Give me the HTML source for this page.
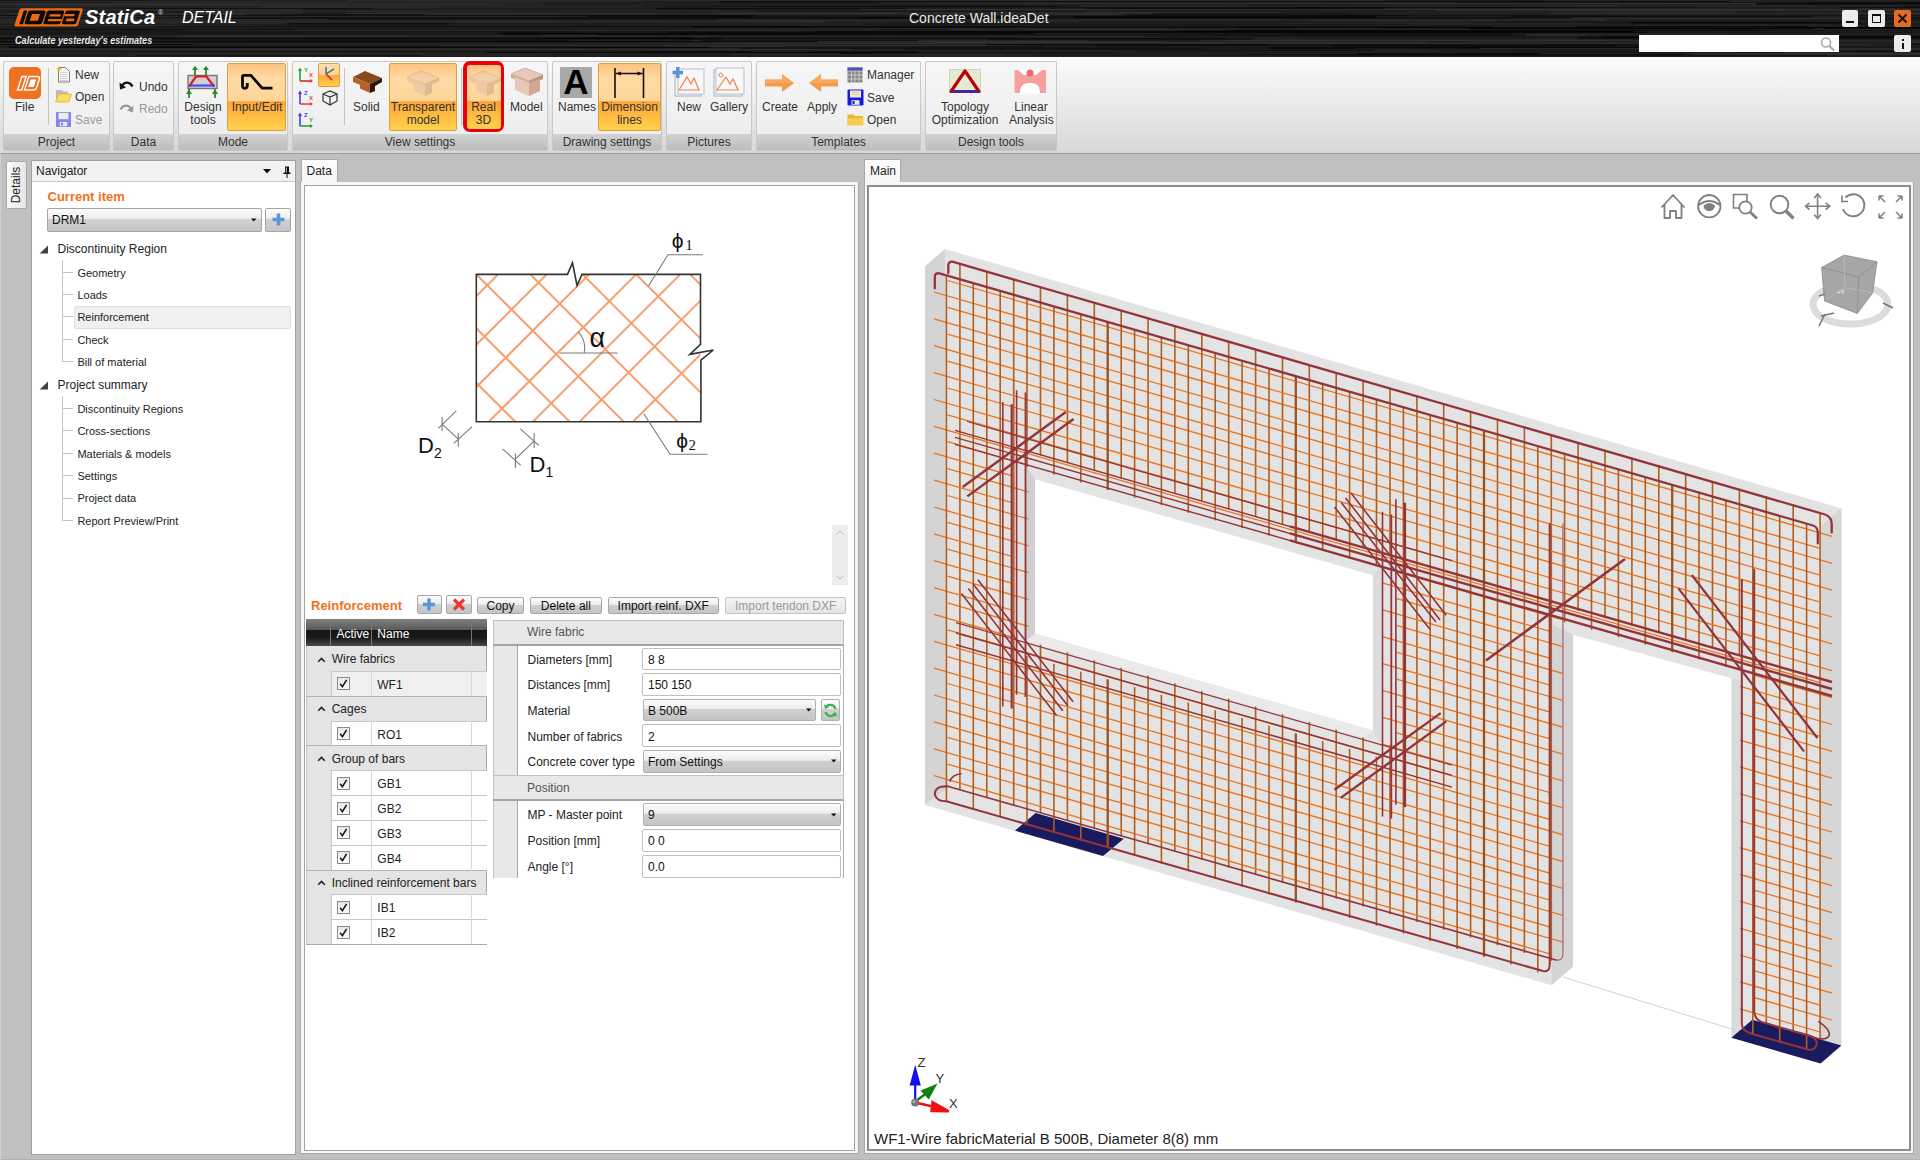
<!DOCTYPE html>
<html><head><meta charset="utf-8">
<style>
*{box-sizing:border-box;margin:0;padding:0}
html,body{width:1920px;height:1160px;overflow:hidden}
body{position:relative;background:#c0c0c0;font-family:"Liberation Sans",sans-serif;font-size:12px;color:#222}
.a{position:absolute}
.t{position:absolute;white-space:nowrap;line-height:1}
/* title bar */
#title{left:0;top:0;width:1920px;height:57px;background:#0a0a0a;overflow:hidden}
/* ribbon */
#ribbon{left:0;top:57px;width:1920px;height:97px;background:linear-gradient(#fbfbfb,#d8d8d8);border-bottom:1px solid #9a9a9a}
.grp{position:absolute;top:4px;height:90px;border:1px solid #c8c8c8;border-radius:2px;background:linear-gradient(#f6f6f6,#ececec)}
.glab{position:absolute;left:0;right:0;bottom:0;height:16px;background:linear-gradient(#d2d2d2,#bdbdbd);text-align:center;font-size:12px;line-height:16px;color:#333}
.hl{position:absolute;border:1px solid #d9a040;border-radius:2px;background:linear-gradient(#ffc27e 0%,#ffdaa4 22%,#ffd597 56%,#ffa43a 57%,#ffd24a 100%)}
.rt{position:absolute;font-size:12px;color:#333;white-space:nowrap;line-height:13px;text-align:center}
.gray{color:#9a9a9a}
/* panels */
.panel{position:absolute;background:#fff}
.tree{position:absolute;font-size:11px;color:#222;white-space:nowrap;line-height:1}
</style></head><body>

<div id="title" class="a">
<svg class="a" style="left:0;top:0" width="1920" height="57"><rect width="1920" height="57" fill="#1d1d1d"/><rect x="35" y="18.5" width="833" height="0.6" fill="#000" opacity="0.35"/><rect x="1720" y="33.2" width="375" height="0.6" fill="#3a3a3a" opacity="0.28"/><rect x="642" y="5.2" width="1018" height="0.6" fill="#000" opacity="0.62"/><rect x="-163" y="33.2" width="765" height="0.6" fill="#000" opacity="0.32"/><rect x="343" y="48.9" width="301" height="0.6" fill="#000" opacity="0.58"/><rect x="-71" y="38.9" width="750" height="0.8" fill="#3a3a3a" opacity="0.50"/><rect x="-168" y="3.6" width="366" height="1.6" fill="#3a3a3a" opacity="0.39"/><rect x="706" y="33.4" width="465" height="0.8" fill="#000" opacity="0.42"/><rect x="866" y="32.7" width="1069" height="1.3" fill="#3a3a3a" opacity="0.69"/><rect x="628" y="6.7" width="945" height="0.8" fill="#000" opacity="0.51"/><rect x="-128" y="54.8" width="736" height="1.0" fill="#3a3a3a" opacity="0.41"/><rect x="1469" y="28.3" width="222" height="0.6" fill="#000" opacity="0.54"/><rect x="-165" y="37.9" width="887" height="1.6" fill="#000" opacity="0.71"/><rect x="556" y="16.2" width="852" height="0.6" fill="#000" opacity="0.48"/><rect x="796" y="34.8" width="379" height="1.0" fill="#3a3a3a" opacity="0.36"/><rect x="1635" y="22.3" width="235" height="1.3" fill="#3a3a3a" opacity="0.38"/><rect x="656" y="7.8" width="728" height="1.3" fill="#000" opacity="0.64"/><rect x="212" y="21.7" width="237" height="0.8" fill="#3a3a3a" opacity="0.36"/><rect x="1008" y="27.6" width="426" height="0.6" fill="#3a3a3a" opacity="0.49"/><rect x="407" y="34.8" width="282" height="1.6" fill="#000" opacity="0.63"/><rect x="714" y="42.2" width="1065" height="1.6" fill="#3a3a3a" opacity="0.43"/><rect x="1108" y="5.9" width="215" height="0.6" fill="#000" opacity="0.52"/><rect x="1034" y="6.3" width="257" height="1.6" fill="#3a3a3a" opacity="0.30"/><rect x="-243" y="20.7" width="1068" height="1.6" fill="#3a3a3a" opacity="0.54"/><rect x="1037" y="54.5" width="648" height="0.6" fill="#000" opacity="0.80"/><rect x="774" y="26.6" width="240" height="0.6" fill="#000" opacity="0.67"/><rect x="1236" y="27.3" width="692" height="0.8" fill="#000" opacity="0.56"/><rect x="906" y="8.4" width="178" height="1.6" fill="#3a3a3a" opacity="0.54"/><rect x="1577" y="5.2" width="694" height="0.8" fill="#3a3a3a" opacity="0.35"/><rect x="816" y="30.9" width="818" height="1.6" fill="#000" opacity="0.79"/><rect x="1489" y="48.6" width="1009" height="0.8" fill="#3a3a3a" opacity="0.47"/><rect x="1897" y="41.7" width="980" height="1.3" fill="#3a3a3a" opacity="0.56"/><rect x="693" y="54.5" width="1134" height="1.0" fill="#000" opacity="0.48"/><rect x="204" y="12.6" width="357" height="0.8" fill="#3a3a3a" opacity="0.69"/><rect x="-296" y="34.8" width="1105" height="1.0" fill="#000" opacity="0.34"/><rect x="1720" y="37.7" width="971" height="0.8" fill="#3a3a3a" opacity="0.33"/><rect x="438" y="45.0" width="991" height="1.3" fill="#3a3a3a" opacity="0.58"/><rect x="53" y="4.8" width="1193" height="0.6" fill="#3a3a3a" opacity="0.66"/><rect x="25" y="46.0" width="1018" height="1.3" fill="#000" opacity="0.48"/><rect x="-9" y="31.3" width="165" height="0.6" fill="#3a3a3a" opacity="0.67"/><rect x="1635" y="24.7" width="1017" height="0.8" fill="#3a3a3a" opacity="0.35"/><rect x="1395" y="28.6" width="492" height="1.6" fill="#3a3a3a" opacity="0.31"/><rect x="485" y="51.9" width="631" height="1.6" fill="#000" opacity="0.56"/><rect x="1650" y="47.1" width="287" height="0.8" fill="#3a3a3a" opacity="0.26"/><rect x="106" y="25.1" width="154" height="0.8" fill="#3a3a3a" opacity="0.46"/><rect x="935" y="41.3" width="492" height="1.6" fill="#3a3a3a" opacity="0.47"/><rect x="1661" y="44.3" width="210" height="0.8" fill="#3a3a3a" opacity="0.60"/><rect x="947" y="28.9" width="948" height="0.6" fill="#3a3a3a" opacity="0.53"/><rect x="837" y="28.8" width="877" height="1.3" fill="#3a3a3a" opacity="0.61"/><rect x="250" y="28.9" width="699" height="1.0" fill="#000" opacity="0.75"/><rect x="694" y="11.5" width="587" height="1.3" fill="#3a3a3a" opacity="0.28"/><rect x="-138" y="13.7" width="853" height="0.6" fill="#000" opacity="0.38"/><rect x="1166" y="40.8" width="300" height="0.8" fill="#000" opacity="0.41"/><rect x="584" y="54.3" width="662" height="0.8" fill="#3a3a3a" opacity="0.44"/><rect x="453" y="29.4" width="356" height="1.0" fill="#3a3a3a" opacity="0.41"/><rect x="718" y="19.3" width="888" height="1.3" fill="#3a3a3a" opacity="0.53"/><rect x="-157" y="29.2" width="1184" height="0.8" fill="#000" opacity="0.35"/><rect x="-212" y="15.1" width="968" height="1.0" fill="#000" opacity="0.71"/><rect x="1201" y="48.4" width="1143" height="1.3" fill="#3a3a3a" opacity="0.66"/><rect x="1255" y="32.5" width="244" height="0.6" fill="#000" opacity="0.39"/><rect x="297" y="51.0" width="168" height="0.6" fill="#000" opacity="0.34"/><rect x="-152" y="48.8" width="1056" height="1.3" fill="#3a3a3a" opacity="0.70"/><rect x="1732" y="23.8" width="803" height="0.6" fill="#3a3a3a" opacity="0.36"/><rect x="58" y="6.2" width="203" height="0.8" fill="#000" opacity="0.61"/><rect x="157" y="30.3" width="618" height="0.8" fill="#3a3a3a" opacity="0.61"/><rect x="-218" y="56.7" width="169" height="1.6" fill="#000" opacity="0.39"/><rect x="1775" y="27.1" width="262" height="1.3" fill="#000" opacity="0.57"/><rect x="1854" y="50.7" width="473" height="0.8" fill="#000" opacity="0.47"/><rect x="1269" y="47.4" width="818" height="1.3" fill="#000" opacity="0.79"/><rect x="-268" y="47.7" width="807" height="1.0" fill="#3a3a3a" opacity="0.27"/><rect x="546" y="37.9" width="681" height="1.0" fill="#000" opacity="0.65"/><rect x="111" y="2.6" width="432" height="0.6" fill="#3a3a3a" opacity="0.68"/><rect x="915" y="55.4" width="407" height="1.0" fill="#3a3a3a" opacity="0.33"/><rect x="-114" y="19.1" width="443" height="0.8" fill="#3a3a3a" opacity="0.60"/><rect x="1514" y="5.2" width="301" height="1.6" fill="#3a3a3a" opacity="0.26"/><rect x="217" y="17.3" width="765" height="1.6" fill="#000" opacity="0.38"/><rect x="1441" y="50.9" width="776" height="1.0" fill="#000" opacity="0.55"/><rect x="1074" y="16.2" width="302" height="1.6" fill="#000" opacity="0.67"/><rect x="9" y="46.3" width="700" height="1.6" fill="#000" opacity="0.71"/><rect x="1224" y="0.9" width="988" height="0.8" fill="#3a3a3a" opacity="0.27"/><rect x="1830" y="36.3" width="545" height="1.3" fill="#000" opacity="0.61"/><rect x="1211" y="35.7" width="664" height="0.6" fill="#3a3a3a" opacity="0.28"/><rect x="1693" y="53.2" width="247" height="1.6" fill="#3a3a3a" opacity="0.58"/><rect x="-135" y="14.4" width="429" height="0.8" fill="#3a3a3a" opacity="0.54"/><rect x="1577" y="26.2" width="231" height="1.0" fill="#000" opacity="0.61"/><rect x="-128" y="36.6" width="305" height="1.0" fill="#000" opacity="0.65"/><rect x="-4" y="35.4" width="657" height="1.3" fill="#3a3a3a" opacity="0.55"/><rect x="1200" y="39.5" width="455" height="1.6" fill="#3a3a3a" opacity="0.46"/><rect x="1905" y="43.7" width="727" height="1.0" fill="#000" opacity="0.77"/><rect x="719" y="1.0" width="1011" height="1.3" fill="#000" opacity="0.49"/><rect x="1766" y="52.2" width="228" height="0.6" fill="#3a3a3a" opacity="0.49"/><rect x="-6" y="54.3" width="1011" height="1.6" fill="#3a3a3a" opacity="0.30"/><rect x="805" y="20.8" width="1070" height="1.3" fill="#3a3a3a" opacity="0.25"/><rect x="701" y="28.0" width="467" height="0.8" fill="#3a3a3a" opacity="0.42"/><rect x="436" y="6.9" width="491" height="1.0" fill="#000" opacity="0.36"/><rect x="1283" y="52.8" width="1097" height="1.0" fill="#3a3a3a" opacity="0.28"/><rect x="1631" y="22.2" width="230" height="1.3" fill="#000" opacity="0.73"/><rect x="-185" y="16.0" width="845" height="0.8" fill="#3a3a3a" opacity="0.37"/><rect x="121" y="29.1" width="542" height="1.3" fill="#000" opacity="0.71"/><rect x="1728" y="36.0" width="1138" height="1.6" fill="#3a3a3a" opacity="0.29"/><rect x="612" y="53.2" width="796" height="0.8" fill="#000" opacity="0.44"/><rect x="1757" y="2.8" width="284" height="1.3" fill="#3a3a3a" opacity="0.38"/><rect x="1340" y="14.6" width="835" height="1.3" fill="#000" opacity="0.45"/><rect x="575" y="31.8" width="326" height="0.8" fill="#3a3a3a" opacity="0.48"/><rect x="922" y="46.3" width="626" height="1.0" fill="#000" opacity="0.52"/><rect x="127" y="8.0" width="245" height="1.0" fill="#000" opacity="0.46"/><rect x="1497" y="21.0" width="362" height="0.6" fill="#000" opacity="0.51"/><rect x="864" y="23.6" width="546" height="1.0" fill="#000" opacity="0.55"/><rect x="500" y="32.7" width="871" height="1.6" fill="#000" opacity="0.73"/><rect x="302" y="12.3" width="411" height="1.3" fill="#000" opacity="0.52"/><rect x="1508" y="17.8" width="1166" height="0.8" fill="#3a3a3a" opacity="0.57"/><rect x="751" y="51.1" width="767" height="0.6" fill="#3a3a3a" opacity="0.67"/><rect x="872" y="52.9" width="642" height="1.3" fill="#3a3a3a" opacity="0.30"/><rect x="860" y="8.8" width="866" height="1.3" fill="#3a3a3a" opacity="0.60"/><rect x="-21" y="0.1" width="748" height="0.6" fill="#000" opacity="0.45"/><rect x="259" y="7.3" width="818" height="0.6" fill="#3a3a3a" opacity="0.39"/><rect x="126" y="53.8" width="424" height="1.6" fill="#3a3a3a" opacity="0.49"/><rect x="319" y="56.8" width="482" height="0.8" fill="#3a3a3a" opacity="0.36"/><rect x="1833" y="14.1" width="890" height="1.0" fill="#3a3a3a" opacity="0.34"/><rect x="1137" y="50.4" width="235" height="0.8" fill="#000" opacity="0.76"/><rect x="-224" y="12.9" width="505" height="1.3" fill="#3a3a3a" opacity="0.43"/><rect x="348" y="0.4" width="1037" height="0.6" fill="#3a3a3a" opacity="0.69"/><rect x="1520" y="17.8" width="392" height="0.8" fill="#3a3a3a" opacity="0.65"/><rect x="1084" y="6.2" width="791" height="0.8" fill="#3a3a3a" opacity="0.66"/><rect x="1020" y="3.2" width="1118" height="0.6" fill="#3a3a3a" opacity="0.69"/><rect x="-185" y="8.1" width="213" height="1.3" fill="#3a3a3a" opacity="0.57"/><rect x="-49" y="17.9" width="233" height="0.8" fill="#3a3a3a" opacity="0.33"/><rect x="1357" y="53.3" width="183" height="1.3" fill="#000" opacity="0.79"/><rect x="-58" y="25.2" width="232" height="0.6" fill="#3a3a3a" opacity="0.68"/><rect x="1841" y="7.1" width="368" height="1.0" fill="#000" opacity="0.45"/><rect x="-105" y="45.8" width="891" height="0.8" fill="#3a3a3a" opacity="0.66"/><rect x="509" y="11.0" width="1092" height="0.6" fill="#000" opacity="0.42"/><rect x="599" y="35.6" width="544" height="1.3" fill="#3a3a3a" opacity="0.66"/><rect x="1359" y="14.6" width="1093" height="1.0" fill="#3a3a3a" opacity="0.40"/><rect x="-203" y="54.4" width="934" height="1.0" fill="#000" opacity="0.45"/><rect x="1022" y="41.1" width="996" height="0.6" fill="#3a3a3a" opacity="0.36"/><rect x="1824" y="27.1" width="1152" height="1.3" fill="#000" opacity="0.76"/><rect x="-5" y="46.4" width="671" height="0.6" fill="#000" opacity="0.67"/><rect x="1416" y="46.9" width="788" height="1.0" fill="#000" opacity="0.53"/><rect x="1022" y="44.7" width="687" height="1.3" fill="#000" opacity="0.42"/><rect x="-225" y="3.7" width="730" height="1.0" fill="#3a3a3a" opacity="0.44"/><rect x="-140" y="6.0" width="806" height="0.8" fill="#3a3a3a" opacity="0.47"/><rect x="692" y="40.5" width="396" height="1.3" fill="#3a3a3a" opacity="0.65"/><rect x="896" y="13.4" width="963" height="0.6" fill="#000" opacity="0.45"/><rect x="294" y="15.9" width="417" height="1.0" fill="#3a3a3a" opacity="0.36"/><rect x="40" y="14.0" width="1078" height="1.6" fill="#3a3a3a" opacity="0.28"/><rect x="246" y="14.3" width="703" height="0.6" fill="#000" opacity="0.80"/><rect x="754" y="5.8" width="1010" height="1.3" fill="#000" opacity="0.32"/><rect x="-35" y="16.7" width="349" height="1.6" fill="#3a3a3a" opacity="0.28"/><rect x="95" y="29.2" width="783" height="0.6" fill="#3a3a3a" opacity="0.52"/><rect x="183" y="35.3" width="537" height="0.8" fill="#3a3a3a" opacity="0.70"/><rect x="1326" y="2.2" width="1110" height="0.6" fill="#000" opacity="0.50"/><rect x="1079" y="21.2" width="232" height="0.6" fill="#000" opacity="0.57"/><rect x="-75" y="3.6" width="565" height="1.6" fill="#3a3a3a" opacity="0.49"/><rect x="583" y="37.2" width="435" height="1.0" fill="#000" opacity="0.51"/><rect x="1355" y="2.9" width="1078" height="1.3" fill="#3a3a3a" opacity="0.64"/><rect x="508" y="56.8" width="357" height="1.3" fill="#3a3a3a" opacity="0.25"/><rect x="641" y="51.4" width="1011" height="1.3" fill="#000" opacity="0.48"/><rect x="-11" y="44.1" width="204" height="0.8" fill="#000" opacity="0.75"/><rect x="1081" y="5.1" width="539" height="1.6" fill="#3a3a3a" opacity="0.41"/><rect x="81" y="9.2" width="220" height="1.3" fill="#3a3a3a" opacity="0.61"/><rect x="138" y="55.1" width="283" height="0.6" fill="#000" opacity="0.54"/><rect x="1756" y="3.0" width="557" height="1.6" fill="#000" opacity="0.75"/><rect x="1602" y="36.5" width="802" height="1.6" fill="#000" opacity="0.71"/><rect x="184" y="10.4" width="570" height="1.6" fill="#3a3a3a" opacity="0.41"/><rect x="1855" y="8.5" width="1006" height="0.8" fill="#3a3a3a" opacity="0.50"/><rect x="-215" y="43.2" width="1030" height="0.6" fill="#3a3a3a" opacity="0.46"/><rect x="1427" y="48.4" width="831" height="1.0" fill="#000" opacity="0.51"/><rect x="692" y="37.6" width="610" height="0.6" fill="#3a3a3a" opacity="0.69"/><rect x="692" y="26.5" width="800" height="1.3" fill="#000" opacity="0.71"/><rect x="-151" y="22.8" width="527" height="1.0" fill="#3a3a3a" opacity="0.45"/><rect x="-209" y="29.1" width="818" height="0.6" fill="#000" opacity="0.46"/><rect x="-122" y="41.1" width="940" height="1.3" fill="#000" opacity="0.69"/><rect x="-153" y="1.5" width="795" height="0.6" fill="#3a3a3a" opacity="0.69"/><rect x="1824" y="28.0" width="1112" height="0.8" fill="#000" opacity="0.66"/><rect x="1549" y="12.6" width="791" height="1.0" fill="#3a3a3a" opacity="0.65"/><rect x="1511" y="15.7" width="301" height="1.6" fill="#000" opacity="0.54"/><rect x="1067" y="33.7" width="399" height="1.0" fill="#3a3a3a" opacity="0.33"/><rect x="1779" y="9.2" width="864" height="1.3" fill="#3a3a3a" opacity="0.60"/><rect x="878" y="6.6" width="818" height="1.0" fill="#000" opacity="0.53"/><rect x="1229" y="29.7" width="1091" height="1.0" fill="#000" opacity="0.61"/><rect x="1471" y="22.5" width="428" height="1.0" fill="#000" opacity="0.48"/><rect x="682" y="43.6" width="336" height="0.6" fill="#3a3a3a" opacity="0.48"/><rect x="1844" y="17.7" width="1064" height="1.0" fill="#000" opacity="0.67"/><rect x="346" y="12.6" width="807" height="1.3" fill="#3a3a3a" opacity="0.65"/><rect x="205" y="7.5" width="836" height="0.6" fill="#3a3a3a" opacity="0.51"/><rect x="861" y="17.3" width="711" height="1.3" fill="#000" opacity="0.59"/><rect x="1085" y="11.6" width="649" height="0.8" fill="#3a3a3a" opacity="0.61"/><rect x="701" y="40.3" width="217" height="0.8" fill="#000" opacity="0.69"/><rect x="287" y="22.9" width="162" height="1.6" fill="#000" opacity="0.60"/><rect x="1036" y="33.0" width="693" height="1.3" fill="#3a3a3a" opacity="0.66"/><rect x="880" y="2.5" width="576" height="0.8" fill="#3a3a3a" opacity="0.66"/><rect x="1060" y="6.0" width="840" height="0.8" fill="#3a3a3a" opacity="0.34"/><rect x="825" y="34.7" width="824" height="1.6" fill="#3a3a3a" opacity="0.39"/><rect x="-192" y="17.1" width="1084" height="1.3" fill="#000" opacity="0.30"/><rect x="1354" y="48.1" width="639" height="1.3" fill="#3a3a3a" opacity="0.70"/><rect x="1130" y="14.9" width="279" height="1.0" fill="#000" opacity="0.43"/><rect x="668" y="31.6" width="978" height="1.6" fill="#000" opacity="0.45"/><rect x="1685" y="52.9" width="240" height="1.6" fill="#3a3a3a" opacity="0.37"/><rect x="1351" y="13.5" width="1142" height="1.0" fill="#3a3a3a" opacity="0.42"/><rect x="542" y="34.3" width="1045" height="1.6" fill="#3a3a3a" opacity="0.63"/><rect x="1604" y="39.8" width="609" height="0.8" fill="#000" opacity="0.45"/><rect x="1082" y="12.1" width="232" height="0.8" fill="#3a3a3a" opacity="0.26"/><rect x="1762" y="6.1" width="512" height="0.8" fill="#000" opacity="0.32"/><rect x="1129" y="7.9" width="195" height="0.6" fill="#000" opacity="0.33"/><rect x="507" y="33.7" width="1008" height="1.6" fill="#000" opacity="0.33"/><rect x="1730" y="49.5" width="1142" height="0.6" fill="#3a3a3a" opacity="0.34"/><rect x="1807" y="1.9" width="1107" height="0.6" fill="#000" opacity="0.62"/><rect x="-78" y="16.4" width="253" height="0.8" fill="#3a3a3a" opacity="0.40"/><rect x="479" y="14.9" width="1127" height="0.6" fill="#000" opacity="0.48"/><rect x="1840" y="18.3" width="679" height="1.0" fill="#000" opacity="0.32"/><rect x="669" y="23.5" width="962" height="1.0" fill="#3a3a3a" opacity="0.27"/><rect x="1286" y="32.3" width="1019" height="1.6" fill="#000" opacity="0.39"/><rect x="149" y="0.1" width="950" height="0.6" fill="#3a3a3a" opacity="0.47"/><rect x="1469" y="28.0" width="344" height="1.3" fill="#000" opacity="0.78"/><rect x="983" y="29.4" width="317" height="0.8" fill="#000" opacity="0.42"/><rect x="1784" y="9.5" width="955" height="1.3" fill="#000" opacity="0.65"/><rect x="1094" y="44.9" width="523" height="1.3" fill="#000" opacity="0.75"/><rect x="637" y="42.5" width="828" height="1.0" fill="#3a3a3a" opacity="0.37"/><rect x="813" y="51.4" width="548" height="0.8" fill="#000" opacity="0.36"/><rect x="1230" y="33.9" width="786" height="0.6" fill="#3a3a3a" opacity="0.40"/><rect x="1572" y="8.9" width="845" height="1.0" fill="#3a3a3a" opacity="0.45"/><rect x="986" y="44.1" width="282" height="1.3" fill="#000" opacity="0.65"/><rect x="294" y="28.9" width="942" height="1.6" fill="#3a3a3a" opacity="0.32"/><rect x="425" y="14.1" width="698" height="0.8" fill="#3a3a3a" opacity="0.68"/><rect x="1820" y="14.7" width="1195" height="0.8" fill="#000" opacity="0.35"/><rect x="1884" y="21.9" width="985" height="1.0" fill="#3a3a3a" opacity="0.34"/><rect x="-63" y="36.4" width="367" height="1.3" fill="#3a3a3a" opacity="0.26"/><rect x="669" y="48.7" width="384" height="1.0" fill="#3a3a3a" opacity="0.31"/><rect x="598" y="34.4" width="928" height="1.3" fill="#000" opacity="0.59"/><rect x="1578" y="36.9" width="851" height="1.6" fill="#000" opacity="0.64"/><rect x="708" y="36.6" width="479" height="0.6" fill="#000" opacity="0.42"/><rect x="1282" y="22.8" width="314" height="1.3" fill="#3a3a3a" opacity="0.26"/><rect x="851" y="48.9" width="844" height="0.8" fill="#000" opacity="0.46"/><rect x="1547" y="0.6" width="1104" height="0.6" fill="#3a3a3a" opacity="0.49"/><rect x="1436" y="9.2" width="1138" height="1.6" fill="#3a3a3a" opacity="0.63"/><rect x="155" y="26.0" width="650" height="0.6" fill="#000" opacity="0.71"/><rect x="611" y="29.7" width="1145" height="0.8" fill="#000" opacity="0.39"/><rect x="1771" y="29.3" width="916" height="1.6" fill="#3a3a3a" opacity="0.28"/><rect x="587" y="15.6" width="164" height="1.3" fill="#000" opacity="0.61"/><rect x="988" y="38.5" width="265" height="1.0" fill="#000" opacity="0.77"/><rect x="186" y="30.0" width="992" height="1.3" fill="#3a3a3a" opacity="0.32"/><rect x="-147" y="53.0" width="988" height="0.8" fill="#3a3a3a" opacity="0.50"/><rect x="1840" y="12.9" width="521" height="1.3" fill="#3a3a3a" opacity="0.38"/><rect x="-22" y="31.3" width="1025" height="1.0" fill="#000" opacity="0.42"/><rect x="1226" y="40.1" width="1182" height="0.8" fill="#3a3a3a" opacity="0.61"/><rect x="495" y="45.5" width="837" height="1.0" fill="#3a3a3a" opacity="0.44"/><rect x="1164" y="36.3" width="531" height="1.0" fill="#000" opacity="0.33"/><rect x="1711" y="47.2" width="973" height="0.8" fill="#3a3a3a" opacity="0.41"/><rect x="1159" y="33.2" width="370" height="0.6" fill="#000" opacity="0.43"/><rect x="17" y="5.8" width="395" height="1.3" fill="#3a3a3a" opacity="0.32"/><rect x="1458" y="51.5" width="326" height="1.6" fill="#000" opacity="0.35"/><rect x="918" y="51.4" width="818" height="1.0" fill="#3a3a3a" opacity="0.56"/><rect x="1347" y="30.3" width="611" height="0.6" fill="#000" opacity="0.43"/><rect x="9" y="13.3" width="668" height="0.6" fill="#3a3a3a" opacity="0.66"/><rect x="247" y="39.9" width="323" height="1.6" fill="#000" opacity="0.30"/><rect x="739" y="47.9" width="741" height="1.0" fill="#000" opacity="0.49"/><rect x="1833" y="23.9" width="229" height="1.0" fill="#000" opacity="0.31"/><rect x="1215" y="34.8" width="1128" height="1.0" fill="#000" opacity="0.35"/><rect x="1381" y="27.6" width="302" height="0.8" fill="#000" opacity="0.61"/></svg>
<svg class="a" style="left:0;top:0" width="260" height="57">
 <g transform="translate(0,26.4) skewX(-18) translate(0,-26.4)">
  <rect x="14" y="8.2" width="63.5" height="18.2" rx="2" fill="#ee6a12"/>
  <rect x="18.6" y="10.6" width="3.6" height="13.6" fill="#0a0a0a"/>
  <rect x="23.4" y="10.6" width="17.6" height="13.6" rx="2" fill="#0a0a0a"/>
  <rect x="28" y="14" width="8" height="6.8" fill="#ee6a12"/>
  <rect x="42.2" y="10.6" width="17.4" height="13.6" rx="2" fill="#0a0a0a"/>
  <rect x="46" y="14.2" width="11" height="2.2" fill="#ee6a12"/>
  <rect x="46" y="19" width="13.6" height="2.2" fill="#ee6a12"/>
  <rect x="60.8" y="10.6" width="14.4" height="13.6" rx="2" fill="#0a0a0a"/>
  <rect x="60.8" y="14" width="10" height="2.2" fill="#ee6a12"/>
  <rect x="64" y="18.6" width="8" height="2.6" fill="#ee6a12"/>
 </g>
</svg>
<div class="t" style="left:85px;top:7px;font-size:20px;font-weight:700;font-style:italic;color:#fff;letter-spacing:0.2px">StatiCa</div>
<div class="t" style="left:158px;top:9px;font-size:7px;color:#ddd">&#174;</div>
<div class="t" style="left:182px;top:9px;font-size:17px;font-style:italic;color:#fff;transform:scaleX(0.94);transform-origin:0 0">DETAIL</div>
<div class="t" style="left:15px;top:36px;font-size:10px;font-weight:700;font-style:italic;color:#e8e8e8;transform:scaleX(0.91);transform-origin:0 0">Calculate yesterday's estimates</div>
<div class="t" style="left:909px;top:11px;font-size:14px;color:#e8e8e8">Concrete Wall.ideaDet</div>
<div class="a" style="left:1842px;top:10px;width:16px;height:17px;border-radius:2px;background:#ececec"><div class="a" style="left:4px;top:11px;width:8px;height:2px;background:#111"></div></div>
<div class="a" style="left:1868px;top:10px;width:17px;height:17px;border-radius:2px;background:#ececec"><div class="a" style="left:4px;top:4px;width:9px;height:9px;border:1.5px solid #111;border-top-width:2px"></div></div>
<div class="a" style="left:1894px;top:10px;width:17px;height:17px;border-radius:2px;background:#e56a22"><svg class="a" style="left:0;top:0" width="17" height="17"><path d="M4.5 4.5L12.5 12.5M12.5 4.5L4.5 12.5" stroke="#111" stroke-width="2"/></svg></div>
<div class="a" style="left:1639px;top:35px;width:200px;height:17px;background:#fff"><svg class="a" style="left:180px;top:1px" width="18" height="16"><circle cx="7" cy="6.5" r="4.5" fill="none" stroke="#aaa" stroke-width="1.6"/><path d="M10.3 9.8L15 14.5" stroke="#aaa" stroke-width="2.2"/></svg></div>
<div class="a" style="left:1894px;top:35px;width:17px;height:17px;border-radius:2px;background:#ececec"><div class="a" style="left:7.5px;top:4px;width:2px;height:2px;background:#111"></div><div class="a" style="left:7.5px;top:7.5px;width:2px;height:6px;background:#111"></div></div>
</div>
<div id="ribbon" class="a">
<!-- groups: coordinates relative to ribbon (top=57) -->
<div class="grp" style="left:3px;width:107px"><div class="glab">Project</div></div>
<div class="grp" style="left:113px;width:61px"><div class="glab">Data</div></div>
<div class="grp" style="left:178px;width:110px"><div class="glab">Mode</div></div>
<div class="grp" style="left:292px;width:256px"><div class="glab">View settings</div></div>
<div class="grp" style="left:552px;width:110px"><div class="glab">Drawing settings</div></div>
<div class="grp" style="left:666px;width:86px"><div class="glab">Pictures</div></div>
<div class="grp" style="left:756px;width:165px"><div class="glab">Templates</div></div>
<div class="grp" style="left:925px;width:132px"><div class="glab">Design tools</div></div>

<!-- highlighted buttons -->
<div class="hl" style="left:227px;top:6px;width:59px;height:68px"></div>
<div class="hl" style="left:318px;top:6px;width:22px;height:24px;background:linear-gradient(#ffdcae 0%,#ffd49a 50%,#ffa840 51%,#ffd048 100%)"></div>
<div class="hl" style="left:389px;top:6px;width:68px;height:68px"></div>
<div class="a" style="left:463px;top:4px;width:41px;height:71px;border:3.5px solid #e8000c;border-radius:7px;background:#e8000c"></div>
<div class="hl" style="left:466.5px;top:7.5px;width:34px;height:64px;border:none;border-radius:3px"></div>
<div class="hl" style="left:598px;top:6px;width:63px;height:68px"></div>

<!-- separators -->
<div class="a" style="left:48px;top:11px;width:1px;height:57px;background:#c4c4c4"></div>
<div class="a" style="left:344px;top:11px;width:1px;height:57px;background:#c4c4c4"></div>
<div class="a" style="left:461px;top:11px;width:1px;height:57px;background:#c4c4c4"></div>

<!-- File -->
<div class="a" style="left:9px;top:9.5px;width:32px;height:32px;border-radius:5px;background:#f07122"></div>
<svg class="a" style="left:9px;top:9.5px" width="32" height="32"><g transform="translate(0,23) skewX(-18) translate(0,-23)"><path d="M8.5 9.5h4.2v13.5H8.5z" fill="none" stroke="#fff" stroke-width="1.5"/><path d="M15.5 9.5h8.5a2.8 2.8 0 0 1 2.8 2.8v7.9a2.8 2.8 0 0 1-2.8 2.8h-8.5z" fill="none" stroke="#fff" stroke-width="1.5"/><rect x="18.2" y="12.5" width="5.6" height="7.5" fill="#fff"/></g></svg>
<div class="rt" style="left:15px;top:44px">File</div>
<!-- New/Open/Save -->
<svg class="a" style="left:56px;top:9px" width="16" height="17"><path d="M2.5 1.5h7l4 4v10.5h-11z" fill="#f8f8f8" stroke="#808080"/><path d="M4 6.5h7.5M4 8.5h7.5M4 10.5h7.5M4 12.5h7.5M4 14.5h7.5" stroke="#b4b4b4" stroke-width="0.6"/><path d="M3 0l0.9 2.1 2.1 0.9-2.1 0.9L3 6 2.1 3.9 0 3 2.1 2.1z" fill="#f6b030"/></svg>
<div class="rt" style="left:75px;top:12px">New</div>
<svg class="a" style="left:55px;top:32px" width="17" height="14"><path d="M1 1h6l1 1.5h5v10H1z" fill="#bbb"/><path d="M3.5 5h13l-3 8H0.5z" fill="#f5e060" stroke="#e0b030" stroke-width="0.8"/></svg>
<div class="rt" style="left:75px;top:34px">Open</div>
<svg class="a" style="left:55px;top:54px" width="17" height="17" opacity="0.7"><rect x="1" y="1" width="15" height="15" rx="1" fill="#5858f0"/><rect x="3.5" y="1.8" width="10" height="6.4" fill="#f0ecd8"/><rect x="4.8" y="11" width="7.4" height="4.2" fill="#e8e8e8"/><rect x="6" y="11.8" width="2" height="2.6" fill="#5858f0"/></svg>
<div class="rt gray" style="left:75px;top:57px">Save</div>
<!-- Undo/Redo -->
<svg class="a" style="left:119px;top:23px" width="15" height="10"><path d="M3 5.5C6 1.5 11 1.5 13.5 6.5" fill="none" stroke="#111" stroke-width="2.4"/><path d="M0.5 2.5L1 9.5 7 7.5z" fill="#111"/></svg>
<div class="rt" style="left:139px;top:24px">Undo</div>
<svg class="a" style="left:119px;top:46px" width="15" height="10"><path d="M12 5.5C9 1.5 4 1.5 1.5 6.5" fill="none" stroke="#999" stroke-width="2.4"/><path d="M14.5 2.5L14 9.5 8 7.5z" fill="#999"/></svg>
<div class="rt gray" style="left:139px;top:46px">Redo</div>
<!-- Design tools -->
<svg class="a" style="left:185px;top:9px" width="34" height="36"><rect x="3" y="9.5" width="29" height="13" fill="#d0d0d0" stroke="#777" stroke-width="1.4"/><path d="M4 20.5L11 10.5H21.5L29 20.5" fill="none" stroke="#e01818" stroke-width="2.2"/><path d="M4 19.5H30" stroke="#4848f0" stroke-width="2.2"/><path d="M10 1v8M21 1v8M4 23v9M30 23v9" stroke="#2a8a2a" stroke-width="1.8"/><path d="M7.5 4L10 0.5 12.5 4M18.5 4L21 0.5 23.5 4M1.5 28L4 24 6.5 28M27.5 28L30 24 32.5 28" fill="#2a8a2a" stroke="#2a8a2a"/></svg>
<div class="rt" style="left:184px;top:44px;width:38px">Design<br>tools</div>
<!-- Input/Edit -->
<svg class="a" style="left:240px;top:14px" width="36" height="20"><path d="M7.3 12V14.6Q7.3 17.3 5 17.3Q2.5 17.3 2.5 15V5.6Q2.5 4.3 3.8 4.3H10.9L22.2 17.1H32.5" fill="none" stroke="#0a0a0a" stroke-width="2.8" stroke-linejoin="miter"/></svg>
<div class="rt" style="left:229px;top:44px;width:56px">Input/Edit</div>

<!-- View settings small icons -->
<svg class="a" style="left:298px;top:9px" width="17" height="17"><path d="M2 15V3M2 15H14" stroke="#2ca02c" stroke-width="1.6"/><path d="M2 15H14" stroke="#f04040" stroke-width="1.6"/><path d="M0 5L2 1.5 4 5" fill="#2ca02c"/><path d="M12 13l3 2-3 2" fill="#f04040"/><text x="6" y="6" font-size="6" fill="#2ca02c" font-family="Liberation Sans" font-weight="700">Y</text><text x="11" y="11" font-size="6" fill="#f04040" font-family="Liberation Sans" font-weight="700">X</text></svg>
<svg class="a" style="left:298px;top:32px" width="17" height="17"><path d="M2 15V3" stroke="#4040f0" stroke-width="1.6"/><path d="M2 15H14" stroke="#f04040" stroke-width="1.6"/><path d="M0 5L2 1.5 4 5" fill="#4040f0"/><path d="M12 13l3 2-3 2" fill="#f04040"/><text x="6" y="6" font-size="6" fill="#4040f0" font-family="Liberation Sans" font-weight="700">Z</text><text x="11" y="11" font-size="6" fill="#f04040" font-family="Liberation Sans" font-weight="700">X</text></svg>
<svg class="a" style="left:298px;top:54px" width="17" height="17"><path d="M2 15V3" stroke="#4040f0" stroke-width="1.6"/><path d="M2 15H14" stroke="#2ca02c" stroke-width="1.6"/><path d="M0 5L2 1.5 4 5" fill="#4040f0"/><path d="M12 13l3 2-3 2" fill="#2ca02c"/><text x="6" y="6" font-size="6" fill="#4040f0" font-family="Liberation Sans" font-weight="700">Z</text><text x="11" y="11" font-size="6" fill="#2ca02c" font-family="Liberation Sans" font-weight="700">Y</text></svg>
<svg class="a" style="left:321px;top:8px" width="17" height="17"><path d="M5 9V2M5 9L13 4M5 9L11 15" stroke="#4848e8" stroke-width="1.4"/><path d="M5 9L13 4" stroke="#2ca02c" stroke-width="1.4"/><path d="M5 9L11 15" stroke="#f03030" stroke-width="1.4"/></svg>
<svg class="a" style="left:321px;top:32px" width="17" height="17"><path d="M2 5L9 2 16 5V12L9 16 2 12z M2 5L9 8 16 5 M9 8V16" fill="none" stroke="#333" stroke-width="1.2"/></svg>
<!-- Solid -->
<svg class="a" style="left:352px;top:13px" width="32" height="25"><path d="M1 7L13 1 30 8 18 14z" fill="#8b4a1c"/><path d="M1 7L18 14V19L1 12z" fill="#b8622a"/><path d="M18 14L30 8V12L18 19z" fill="#2a1a10"/><path d="M8 11.5L18 15.5V23L8 18.5z" fill="#b8622a"/><path d="M18 16L23 13.5V21L18 23z" fill="#2a1a10"/></svg>
<div class="rt" style="left:353px;top:44px">Solid</div>
<!-- Transparent model -->
<svg class="a" style="left:405px;top:13px" width="36" height="27" opacity="0.55"><path d="M2 7L16 1 34 8 20 14z" fill="#e8c8b0" stroke="#d0a890"/><path d="M2 7L20 14V18L2 11z" fill="#ddb89c"/><path d="M20 14L34 8V11L20 18z" fill="#c8a088"/><path d="M9 11L20 15.5V26L9 21z" fill="#e0c0a8"/><path d="M20 16L27 13V23L20 26z" fill="#c8a088"/></svg>
<div class="rt" style="left:389px;top:44px;width:68px">Transparent<br>model</div>
<!-- Real 3D -->
<svg class="a" style="left:467px;top:13px" width="36" height="27" opacity="0.5"><path d="M2 7L16 1 34 8 20 14z" fill="#e8c8b0" stroke="#d0a890"/><path d="M2 7L20 14V18L2 11z" fill="#ddb89c"/><path d="M20 14L34 8V11L20 18z" fill="#c8a088"/><path d="M9 11L20 15.5V26L9 21z" fill="#e0c0a8"/><path d="M20 16L27 13V23L20 26z" fill="#c8a088"/></svg>
<div class="rt" style="left:466px;top:44px;width:35px">Real<br>3D</div>
<!-- Model -->
<svg class="a" style="left:510px;top:9px" width="34" height="32"><path d="M1 8L15 2 33 9 19 15z" fill="#e8c8b8" stroke="#c8a898" stroke-width="0.8"/><path d="M1 8L19 15V19L1 12z" fill="#d8a890"/><path d="M19 15L33 9V13L19 19z" fill="#c09078"/><path d="M5 11L19 16.5V30L5 24z" fill="#e6c8b6"/><path d="M19 17L30 12.5V25L19 30z" fill="#d0a894"/></svg>
<div class="rt" style="left:510px;top:44px">Model</div>

<!-- Names -->
<div class="a" style="left:560px;top:10px;width:32px;height:31px;background:#a8a8a8"></div>
<div class="t" style="left:561px;top:7px;font-size:35px;font-weight:700;color:#000;width:30px;text-align:center">A</div>
<div class="rt" style="left:558px;top:44px">Names</div>
<!-- Dimension lines -->
<svg class="a" style="left:610px;top:9px" width="38" height="34"><path d="M5 2V32M33.5 2V32M6 7.5H32.5" stroke="#111" stroke-width="1.6"/><path d="M6 7.5L11 5.5V9.5zM32.5 7.5L27.5 5.5V9.5z" fill="#111"/></svg>
<div class="rt" style="left:598px;top:44px;width:63px">Dimension<br>lines</div>

<!-- Pictures New -->
<svg class="a" style="left:672px;top:9px" width="33" height="32"><rect x="3" y="6" width="26" height="24" fill="#f4f4f4" stroke="#a8b0c8"/><rect x="6" y="3" width="26" height="25" fill="#f8f8f8" stroke="#b8c0d4"/><path d="M7 24L15 11 19 18 22 12 27 24z" fill="none" stroke="#f08050" stroke-width="1.2"/><path d="M0.5 6.5H11M5.8 1V12" stroke="#5a90d8" stroke-width="3.4"/></svg>
<div class="rt" style="left:677px;top:44px">New</div>
<svg class="a" style="left:713px;top:10px" width="32" height="30"><rect x="1" y="3" width="28" height="26" fill="#f4f4f4" stroke="#a8b0c8"/><rect x="3" y="1" width="28" height="26" fill="#f8f8f8" stroke="#b8c0d4"/><path d="M4 23L13 10 17 17 20 12 25 23z" fill="none" stroke="#f08050" stroke-width="1.2"/><circle cx="8" cy="8" r="2" fill="none" stroke="#f08050"/></svg>
<div class="rt" style="left:710px;top:44px">Gallery</div>

<!-- Templates -->
<svg class="a" style="left:764px;top:16px" width="31" height="20"><path d="M1 6.5H18V1L30 10 18 19V13.5H1z" fill="#f59a48"/><path d="M1 6.5H18V1L30 10H1z" fill="#f8b070" opacity="0.6"/></svg>
<div class="rt" style="left:762px;top:44px">Create</div>
<svg class="a" style="left:808px;top:16px" width="31" height="20"><path d="M30 6.5H13V1L1 10 13 19V13.5H30z" fill="#f59a48"/><path d="M30 6.5H13V1L1 10H30z" fill="#f8b070" opacity="0.6"/></svg>
<div class="rt" style="left:807px;top:44px">Apply</div>
<svg class="a" style="left:847px;top:10px" width="17" height="16"><rect x="0.5" y="0.5" width="15" height="15" fill="#888"/><path d="M0.5 4H16M0.5 8H16M0.5 12H16M4.5 0.5V16M8 0.5V16M12 0.5V16" stroke="#d8d8d8" stroke-width="0.8"/><rect x="0.5" y="0.5" width="15" height="3" fill="#5050c0"/></svg>
<div class="rt" style="left:867px;top:12px">Manager</div>
<svg class="a" style="left:847px;top:32px" width="17" height="17"><rect x="0.5" y="0.5" width="16" height="16" rx="1" fill="#1c1cd8"/><rect x="3" y="1.5" width="11" height="7" fill="#f4ecd0"/><path d="M4.5 3.5h8M4.5 5.5h8" stroke="#c8b888" stroke-width="0.6"/><rect x="4.5" y="11.2" width="8" height="4.6" fill="#e8e8e8"/><rect x="5.5" y="12" width="2" height="3" fill="#1c1cd8"/></svg>
<div class="rt" style="left:867px;top:35px">Save</div>
<svg class="a" style="left:847px;top:56px" width="17" height="13"><path d="M0.5 1.5h6l1.5 1.5h8v9h-15.5z" fill="#e8b830"/><path d="M0.5 5h16v7.5h-16z" fill="#f6cc50"/></svg>
<div class="rt" style="left:867px;top:57px">Open</div>

<!-- Design tools -->
<svg class="a" style="left:949px;top:12px" width="33" height="25"><rect x="0.5" y="0.5" width="31" height="23" fill="#e2ecd4" stroke="#c8d8b8"/><path d="M16 2L30 22.5H2z" fill="none" stroke="#c00000" stroke-width="3.2" stroke-linejoin="round"/><path d="M2 22.5H30" stroke="#3030c0" stroke-width="2.2"/></svg>
<div class="rt" style="left:930px;top:44px;width:70px">Topology<br>Optimization</div>
<svg class="a" style="left:1014px;top:12px" width="33" height="25"><rect x="0.5" y="0.5" width="31" height="24" fill="#fff"/><path d="M0.5 1H32V24H26C26 16 22 14 16 14 10 14 6 16 6 24H0.5z" fill="#f8a0a0"/><path d="M4 1L10 6H22L28 1" fill="#fff"/><circle cx="16" cy="4" r="3.5" fill="#f06868"/></svg>
<div class="rt" style="left:1009px;top:44px;width:44px">Linear<br>Analysis</div>
</div>
<div class="a" style="left:6px;top:161px;width:21px;height:48px;background:linear-gradient(90deg,#fbfbfb,#e6e6e6);border:1px solid #a8a8a8;border-radius:2px 2px 2px 2px"></div>
<div class="t" style="left:16.5px;top:185px;font-size:12px;color:#222;transform:translate(-50%,-50%) rotate(-90deg);transform-origin:0 0;width:0"></div>
<div class="a" style="left:6px;top:161px;width:21px;height:48px;display:flex;align-items:center;justify-content:center"><div style="transform:rotate(-90deg);font-size:12px;color:#222;white-space:nowrap;line-height:12px">Details</div></div>
<div class="a" style="left:31px;top:160px;width:265px;height:995px;background:#fff;border:1px solid #a0a0a0;border-left-width:1.5px"></div>
<div class="a" style="left:32px;top:161px;width:263px;height:21px;background:#f2f2f2;border-bottom:1px solid #c8c8c8"></div>
<div class="t" style="left:36px;top:165.3px;font-size:12px;color:#222;">Navigator</div>
<svg class="a" style="left:260px;top:165px" width="32" height="14"><path d="M3 4H11L7 8.5z" fill="#111"/><path d="M25 1.5h4v6h1.5v1.5h-3v4h-1v-4h-3V7.5h1.5z" fill="#111"/><path d="M26.3 2.5v5" stroke="#fff" stroke-width="0.8"/></svg>
<div class="t" style="left:47.5px;top:189.5px;font-size:13px;color:#f07020;font-weight:700">Current item</div>
<div class="a" style="left:47px;top:208px;width:215px;height:24px;background:linear-gradient(#fdfdfd 0%,#ececec 45%,#d2d2d2 46%,#c6c6c6 100%);border:1px solid #a4a4a4;border-radius:2px"></div>
<div class="t" style="left:52px;top:214.3px;font-size:12px;color:#111;">DRM1</div>
<svg class="a" style="left:250px;top:217px" width="8" height="6"><path d="M1 1.5H6.5L3.75 4.5z" fill="#111"/></svg>
<div class="a" style="left:265px;top:208px;width:26px;height:24px;background:linear-gradient(#fdfdfd 0%,#ececec 45%,#d2d2d2 46%,#c6c6c6 100%);border:1px solid #a4a4a4;border-radius:2px"></div>
<svg class="a" style="left:271px;top:212px" width="15" height="15"><path d="M7.5 1.5V13.5M1.5 7.5H13.5" stroke="#5b95d8" stroke-width="3.6"/></svg>
<svg class="a" style="left:39px;top:244.8px" width="10" height="10"><path d="M9 0.5V8.5H0.5z" fill="#444"/></svg>
<div class="t" style="left:57.5px;top:243.3px;font-size:12px;color:#222;">Discontinuity Region</div>
<div class="a" style="left:73.5px;top:305.5px;width:217px;height:23px;background:#f0f0f0;border:1px solid #dedede;border-radius:2px"></div>
<div class="t" style="left:77.4px;top:267.5px;font-size:11px;color:#222;">Geometry</div>
<div class="a" style="left:62px;top:271.6px;width:10.5px;height:1px;background:#c4c4c4"></div>
<div class="t" style="left:77.4px;top:289.9px;font-size:11px;color:#222;">Loads</div>
<div class="a" style="left:62px;top:294.0px;width:10.5px;height:1px;background:#c4c4c4"></div>
<div class="t" style="left:77.4px;top:312.3px;font-size:11px;color:#222;">Reinforcement</div>
<div class="a" style="left:62px;top:316.4px;width:10.5px;height:1px;background:#c4c4c4"></div>
<div class="t" style="left:77.4px;top:334.7px;font-size:11px;color:#222;">Check</div>
<div class="a" style="left:62px;top:338.8px;width:10.5px;height:1px;background:#c4c4c4"></div>
<div class="t" style="left:77.4px;top:357.1px;font-size:11px;color:#222;">Bill of material</div>
<div class="a" style="left:62px;top:361.2px;width:10.5px;height:1px;background:#c4c4c4"></div>
<div class="a" style="left:62px;top:260px;width:1px;height:101.2px;background:#c4c4c4"></div>
<svg class="a" style="left:39px;top:380.7px" width="10" height="10"><path d="M9 0.5V8.5H0.5z" fill="#444"/></svg>
<div class="t" style="left:57.5px;top:379.2px;font-size:12px;color:#222;">Project summary</div>
<div class="t" style="left:77.4px;top:403.8px;font-size:11px;color:#222;">Discontinuity Regions</div>
<div class="a" style="left:62px;top:407.9px;width:10.5px;height:1px;background:#c4c4c4"></div>
<div class="t" style="left:77.4px;top:426.2px;font-size:11px;color:#222;">Cross-sections</div>
<div class="a" style="left:62px;top:430.3px;width:10.5px;height:1px;background:#c4c4c4"></div>
<div class="t" style="left:77.4px;top:448.6px;font-size:11px;color:#222;">Materials &amp; models</div>
<div class="a" style="left:62px;top:452.7px;width:10.5px;height:1px;background:#c4c4c4"></div>
<div class="t" style="left:77.4px;top:471.0px;font-size:11px;color:#222;">Settings</div>
<div class="a" style="left:62px;top:475.1px;width:10.5px;height:1px;background:#c4c4c4"></div>
<div class="t" style="left:77.4px;top:493.4px;font-size:11px;color:#222;">Project data</div>
<div class="a" style="left:62px;top:497.5px;width:10.5px;height:1px;background:#c4c4c4"></div>
<div class="t" style="left:77.4px;top:515.8px;font-size:11px;color:#222;">Report Preview/Print</div>
<div class="a" style="left:62px;top:519.9px;width:10.5px;height:1px;background:#c4c4c4"></div>
<div class="a" style="left:62px;top:396px;width:1px;height:123.9px;background:#c4c4c4"></div>
<div class="a" style="left:0;top:154px;width:1px;height:1006px;background:#d0d0d0"></div>
<div class="a" style="left:0;top:1158.5px;width:1920px;height:1.5px;background:#b2b2b2"></div>
<div class="a" style="left:300.5px;top:159px;width:37px;height:24px;background:linear-gradient(#fdfdfd,#f4f4f4);border:1px solid #a8a8a8;border-bottom:none;border-radius:2px 2px 0 0"></div>
<div class="t" style="left:306.5px;top:165.3px;font-size:12px;color:#222;">Data</div>
<div class="a" style="left:300px;top:182px;width:558.5px;height:972px;background:#f7f7f7;border:1px solid #a8a8a8;border-top:none"></div>
<div class="a" style="left:301px;top:182px;width:36px;height:2px;background:#f7f7f7"></div>
<div class="a" style="left:304px;top:185px;width:551px;height:966px;background:#fff;border:1px solid #a4a4a4"></div>
<svg class="a" style="left:0;top:0" width="860" height="600">
<defs><clipPath id="rc"><rect x="476.3" y="274.4" width="224.2" height="147.4"/></clipPath></defs>
<g clip-path="url(#rc)" stroke="#f6a070" stroke-width="2">
<line x1="572.5" y1="200" x2="272.5" y2="500"/><line x1="621" y1="200" x2="321" y2="500"/><line x1="663.5" y1="200" x2="363.5" y2="500"/><line x1="710.5" y1="200" x2="410.5" y2="500"/><line x1="754.6" y1="200" x2="454.6" y2="500"/><line x1="801.2" y1="200" x2="501.20000000000005" y2="500"/><line x1="854.8" y1="200" x2="554.8" y2="500"/><line x1="293.5" y1="200" x2="593.5" y2="500"/><line x1="348" y1="200" x2="648" y2="500"/><line x1="402" y1="200" x2="702" y2="500"/><line x1="456" y1="200" x2="756" y2="500"/><line x1="508.2" y1="200" x2="808.2" y2="500"/><line x1="561.8" y1="200" x2="861.8" y2="500"/><line x1="615.8" y1="200" x2="915.8" y2="500"/>
</g>
<path d="M476.3 274.4H567.5L572.5 262.8 577 285.5 582 274.4H700.5V344.3L689.8 354.4 713.3 350 700.9 360.1V421.8H476.3Z" fill="none" stroke="#333" stroke-width="1.6" stroke-linejoin="miter"/>
<g stroke="#7a7a7a" stroke-width="1.1" fill="none"><path d="M702.8 254.8H668L648.5 286"/><path d="M643.8 413.8L670 454.3H707.6"/><path d="M559.3 353H617.5"/><path d="M578.2 331.6A25 25 0 0 1 584.3 353"/><path d="M456.3 410.8L438.3 428.3M472.1 426.7L453.8 443.3M442.1 424.2L458.3 439.2M442.1 417.1V431.3M458.3 432.9V446.7"/><path d="M520.4 428.8L538.8 445.4M502.5 448.8L520.8 465.4M534.2 440.8L515.4 459.2M534.2 433.3V447.9M515.4 453.3V467.9"/></g>
</svg>
<div class="t" style="left:589.5px;top:325.1px;font-size:27px;color:#111;">&#945;</div>
<div class="t" style="left:418px;top:435.2px;font-size:22px;color:#111;">D</div>
<div class="t" style="left:434px;top:446.4px;font-size:14px;color:#111;">2</div>
<div class="t" style="left:529.5px;top:453.9px;font-size:22px;color:#111;">D</div>
<div class="t" style="left:545.5px;top:465.3px;font-size:14px;color:#111;">1</div>
<div class="t" style="left:671.8px;top:229.7px;font-size:21px;color:#111;">&#981;</div>
<div class="t" style="left:685.2px;top:238.3px;font-size:15px;color:#111;font-family:'Liberation Serif',serif">1</div>
<div class="t" style="left:676.3px;top:429.8px;font-size:21px;color:#111;">&#981;</div>
<div class="t" style="left:688.5px;top:437.9px;font-size:15px;color:#111;font-family:'Liberation Serif',serif">2</div>
<div class="a" style="left:832px;top:524.5px;width:16px;height:60px;background:#ececec"></div>
<svg class="a" style="left:832px;top:524.5px" width="16" height="60"><path d="M4.5 9.5L8 6 11.5 9.5M4.5 50.5L8 54 11.5 50.5" fill="none" stroke="#b8b8b8" stroke-width="1"/></svg>
<div class="t" style="left:311px;top:599.2px;font-size:13px;color:#f07020;font-weight:700">Reinforcement</div>
<div class="a" style="left:416.5px;top:594.5px;width:25.0px;height:19.700000000000045px;background:linear-gradient(#fdfdfd 0%,#ececec 45%,#d0d0d0 46%,#c4c4c4 100%);border:1px solid #a8a8a8;border-radius:2px"></div>
<svg class="a" style="left:421px;top:597px" width="16" height="15"><path d="M8 1.5V13.5M2 7.5H14" stroke="#5b95d8" stroke-width="3.4"/></svg>
<div class="a" style="left:446.3px;top:594.5px;width:25.399999999999977px;height:19.700000000000045px;background:linear-gradient(#fdfdfd 0%,#ececec 45%,#d0d0d0 46%,#c4c4c4 100%);border:1px solid #a8a8a8;border-radius:2px"></div>
<svg class="a" style="left:451px;top:597px" width="16" height="15"><path d="M3 2.5L13 12.5M13 2.5L3 12.5" stroke="#e83838" stroke-width="3.2"/></svg>
<div class="a" style="left:477.4px;top:596.7px;width:46.30000000000007px;height:17.799999999999955px;background:linear-gradient(#fdfdfd 0%,#ececec 45%,#d0d0d0 46%,#c4c4c4 100%);border:1px solid #a8a8a8;border-radius:2px"></div>
<div class="t" style="left:477.4px;top:596.7px;width:46.30000000000007px;height:17.799999999999955px;line-height:18.799999999999955px;text-align:center;font-size:12px;color:#111">Copy</div>
<div class="a" style="left:530.2px;top:596.7px;width:71.39999999999998px;height:17.799999999999955px;background:linear-gradient(#fdfdfd 0%,#ececec 45%,#d0d0d0 46%,#c4c4c4 100%);border:1px solid #a8a8a8;border-radius:2px"></div>
<div class="t" style="left:530.2px;top:596.7px;width:71.39999999999998px;height:17.799999999999955px;line-height:18.799999999999955px;text-align:center;font-size:12px;color:#111">Delete all</div>
<div class="a" style="left:608px;top:596.7px;width:110.5px;height:17.799999999999955px;background:linear-gradient(#fdfdfd 0%,#ececec 45%,#d0d0d0 46%,#c4c4c4 100%);border:1px solid #a8a8a8;border-radius:2px"></div>
<div class="t" style="left:608px;top:596.7px;width:110.5px;height:17.799999999999955px;line-height:18.799999999999955px;text-align:center;font-size:12px;color:#111">Import reinf. DXF</div>
<div class="a" style="left:725px;top:596.7px;width:121.3px;height:17.8px;background:linear-gradient(#f4f4f4,#e4e4e4);border:1px solid #c4c4c4;border-radius:2px"></div>
<div class="t" style="left:725px;top:596.7px;width:121.3px;height:17.8px;line-height:18.8px;text-align:center;font-size:12px;color:#9a9a9a">Import tendon DXF</div>
<div class="a" style="left:306.4px;top:619.4px;width:180.2px;height:26.6px;background:linear-gradient(#808080 0%,#5a5a5a 40%,#141414 42%,#1a1a1a 70%,#4a4a4a 100%)"></div>
<div class="a" style="left:330.3px;top:620px;width:1.2px;height:26px;background:#3a3a3a;border-right:1px solid #777"></div>
<div class="a" style="left:371.2px;top:620px;width:1.2px;height:26px;background:#3a3a3a;border-right:1px solid #777"></div>
<div class="a" style="left:470.9px;top:620px;width:1.2px;height:26px;background:#3a3a3a;border-right:1px solid #777"></div>
<div class="t" style="left:336.4px;top:628.2px;font-size:12px;color:#fff;">Active</div>
<div class="t" style="left:377.3px;top:628.2px;font-size:12px;color:#fff;">Name</div>
<div class="a" style="left:306.4px;top:646px;width:180.8px;height:298.5px;background:#e4e4e4;border-left:1px solid #c8c8c8;border-right:1px solid #a8a8a8;border-bottom:1px solid #a8a8a8"></div>
<svg class="a" style="left:317px;top:656.5px" width="9" height="6"><path d="M1.2 4.8L4.5 1.5 7.8 4.8" fill="none" stroke="#222" stroke-width="1.6"/></svg>
<div class="t" style="left:331.7px;top:653.2px;font-size:12px;color:#222;">Wire fabrics</div>
<div class="a" style="left:330.5px;top:670.8px;width:156.5px;height:25.0px;background:#efefef;border-top:1px solid #c8c8c8;border-left:1px solid #c8c8c8"></div>
<div class="a" style="left:371.2px;top:670.8px;width:1px;height:24.8px;background:#d8d8d8"></div>
<div class="a" style="left:471px;top:670.8px;width:1px;height:24.8px;background:#d8d8d8"></div>
<div class="a" style="left:337px;top:677.3px;width:13px;height:13px;background:linear-gradient(#e8e8e8,#fafafa);border:1px solid #8a8a8a"></div>
<svg class="a" style="left:337px;top:677.3px" width="13" height="13"><path d="M3.2 6.8L5.4 9.6 9.6 2.8" fill="none" stroke="#111" stroke-width="1.5"/></svg>
<div class="t" style="left:377.3px;top:679.0px;font-size:12px;color:#222;">WF1</div>
<div class="a" style="left:306.4px;top:695.7px;width:180.8px;height:1px;background:#b4b4b4"></div>
<svg class="a" style="left:317px;top:706.2px" width="9" height="6"><path d="M1.2 4.8L4.5 1.5 7.8 4.8" fill="none" stroke="#222" stroke-width="1.6"/></svg>
<div class="t" style="left:331.7px;top:702.9px;font-size:12px;color:#222;">Cages</div>
<div class="a" style="left:330.5px;top:720.5px;width:156.5px;height:25.0px;background:#fff;border-top:1px solid #c8c8c8;border-left:1px solid #c8c8c8"></div>
<div class="a" style="left:371.2px;top:720.5px;width:1px;height:24.8px;background:#d8d8d8"></div>
<div class="a" style="left:471px;top:720.5px;width:1px;height:24.8px;background:#d8d8d8"></div>
<div class="a" style="left:337px;top:727.0px;width:13px;height:13px;background:linear-gradient(#e8e8e8,#fafafa);border:1px solid #8a8a8a"></div>
<svg class="a" style="left:337px;top:727.0px" width="13" height="13"><path d="M3.2 6.8L5.4 9.6 9.6 2.8" fill="none" stroke="#111" stroke-width="1.5"/></svg>
<div class="t" style="left:377.3px;top:728.6px;font-size:12px;color:#222;">RO1</div>
<div class="a" style="left:306.4px;top:745.3px;width:180.8px;height:1px;background:#b4b4b4"></div>
<svg class="a" style="left:317px;top:755.8px" width="9" height="6"><path d="M1.2 4.8L4.5 1.5 7.8 4.8" fill="none" stroke="#222" stroke-width="1.6"/></svg>
<div class="t" style="left:331.7px;top:752.6px;font-size:12px;color:#222;">Group of bars</div>
<div class="a" style="left:330.5px;top:770.1px;width:156.5px;height:25.0px;background:#fff;border-top:1px solid #c8c8c8;border-left:1px solid #c8c8c8"></div>
<div class="a" style="left:371.2px;top:770.1px;width:1px;height:24.8px;background:#d8d8d8"></div>
<div class="a" style="left:471px;top:770.1px;width:1px;height:24.8px;background:#d8d8d8"></div>
<div class="a" style="left:337px;top:776.6px;width:13px;height:13px;background:linear-gradient(#e8e8e8,#fafafa);border:1px solid #8a8a8a"></div>
<svg class="a" style="left:337px;top:776.6px" width="13" height="13"><path d="M3.2 6.8L5.4 9.6 9.6 2.8" fill="none" stroke="#111" stroke-width="1.5"/></svg>
<div class="t" style="left:377.3px;top:778.3px;font-size:12px;color:#222;">GB1</div>
<div class="a" style="left:330.5px;top:795.0px;width:156.5px;height:25.0px;background:#fff;border-top:1px solid #c8c8c8;border-left:1px solid #c8c8c8"></div>
<div class="a" style="left:371.2px;top:795.0px;width:1px;height:24.8px;background:#d8d8d8"></div>
<div class="a" style="left:471px;top:795.0px;width:1px;height:24.8px;background:#d8d8d8"></div>
<div class="a" style="left:337px;top:801.5px;width:13px;height:13px;background:linear-gradient(#e8e8e8,#fafafa);border:1px solid #8a8a8a"></div>
<svg class="a" style="left:337px;top:801.5px" width="13" height="13"><path d="M3.2 6.8L5.4 9.6 9.6 2.8" fill="none" stroke="#111" stroke-width="1.5"/></svg>
<div class="t" style="left:377.3px;top:803.1px;font-size:12px;color:#222;">GB2</div>
<div class="a" style="left:330.5px;top:819.8px;width:156.5px;height:25.0px;background:#fff;border-top:1px solid #c8c8c8;border-left:1px solid #c8c8c8"></div>
<div class="a" style="left:371.2px;top:819.8px;width:1px;height:24.8px;background:#d8d8d8"></div>
<div class="a" style="left:471px;top:819.8px;width:1px;height:24.8px;background:#d8d8d8"></div>
<div class="a" style="left:337px;top:826.3px;width:13px;height:13px;background:linear-gradient(#e8e8e8,#fafafa);border:1px solid #8a8a8a"></div>
<svg class="a" style="left:337px;top:826.3px" width="13" height="13"><path d="M3.2 6.8L5.4 9.6 9.6 2.8" fill="none" stroke="#111" stroke-width="1.5"/></svg>
<div class="t" style="left:377.3px;top:828.0px;font-size:12px;color:#222;">GB3</div>
<div class="a" style="left:330.5px;top:844.6px;width:156.5px;height:25.0px;background:#fff;border-top:1px solid #c8c8c8;border-left:1px solid #c8c8c8"></div>
<div class="a" style="left:371.2px;top:844.6px;width:1px;height:24.8px;background:#d8d8d8"></div>
<div class="a" style="left:471px;top:844.6px;width:1px;height:24.8px;background:#d8d8d8"></div>
<div class="a" style="left:337px;top:851.1px;width:13px;height:13px;background:linear-gradient(#e8e8e8,#fafafa);border:1px solid #8a8a8a"></div>
<svg class="a" style="left:337px;top:851.1px" width="13" height="13"><path d="M3.2 6.8L5.4 9.6 9.6 2.8" fill="none" stroke="#111" stroke-width="1.5"/></svg>
<div class="t" style="left:377.3px;top:852.8px;font-size:12px;color:#222;">GB4</div>
<div class="a" style="left:306.4px;top:869.5px;width:180.8px;height:1px;background:#b4b4b4"></div>
<svg class="a" style="left:317px;top:880.0px" width="9" height="6"><path d="M1.2 4.8L4.5 1.5 7.8 4.8" fill="none" stroke="#222" stroke-width="1.6"/></svg>
<div class="t" style="left:331.7px;top:876.7px;font-size:12px;color:#222;">Inclined reinforcement bars</div>
<div class="a" style="left:330.5px;top:894.3px;width:156.5px;height:25.0px;background:#fff;border-top:1px solid #c8c8c8;border-left:1px solid #c8c8c8"></div>
<div class="a" style="left:371.2px;top:894.3px;width:1px;height:24.8px;background:#d8d8d8"></div>
<div class="a" style="left:471px;top:894.3px;width:1px;height:24.8px;background:#d8d8d8"></div>
<div class="a" style="left:337px;top:900.8px;width:13px;height:13px;background:linear-gradient(#e8e8e8,#fafafa);border:1px solid #8a8a8a"></div>
<svg class="a" style="left:337px;top:900.8px" width="13" height="13"><path d="M3.2 6.8L5.4 9.6 9.6 2.8" fill="none" stroke="#111" stroke-width="1.5"/></svg>
<div class="t" style="left:377.3px;top:902.4px;font-size:12px;color:#222;">IB1</div>
<div class="a" style="left:330.5px;top:919.1px;width:156.5px;height:25.0px;background:#fff;border-top:1px solid #c8c8c8;border-left:1px solid #c8c8c8"></div>
<div class="a" style="left:371.2px;top:919.1px;width:1px;height:24.8px;background:#d8d8d8"></div>
<div class="a" style="left:471px;top:919.1px;width:1px;height:24.8px;background:#d8d8d8"></div>
<div class="a" style="left:337px;top:925.6px;width:13px;height:13px;background:linear-gradient(#e8e8e8,#fafafa);border:1px solid #8a8a8a"></div>
<svg class="a" style="left:337px;top:925.6px" width="13" height="13"><path d="M3.2 6.8L5.4 9.6 9.6 2.8" fill="none" stroke="#111" stroke-width="1.5"/></svg>
<div class="t" style="left:377.3px;top:927.3px;font-size:12px;color:#222;">IB2</div>
<div class="a" style="left:493.4px;top:619.5px;width:350.4px;height:258.1px;background:#fff;border-right:1px solid #b0b0b0"></div>
<div class="a" style="left:493.4px;top:619.5px;width:24.5px;height:258.1px;background:#e8e8e8;border-right:1px solid #a8a8a8;border-left:1px solid #c4c4c4"></div>
<div class="a" style="left:493.4px;top:619.5px;width:350.4px;height:26.299999999999955px;background:#e8e8e8;border:1px solid #c0c0c0;border-bottom:2px solid #a4a4a4"></div>
<div class="t" style="left:527px;top:626.3px;font-size:12px;color:#555;">Wire fabric</div>
<div class="a" style="left:493.4px;top:775.1px;width:350.4px;height:25.899999999999977px;background:#e8e8e8;border:1px solid #c0c0c0;border-bottom:2px solid #a4a4a4"></div>
<div class="t" style="left:527px;top:781.9px;font-size:12px;color:#555;">Position</div>
<div class="t" style="left:527.5px;top:653.5px;font-size:12px;color:#222;">Diameters [mm]</div>
<div class="a" style="left:642.4px;top:647.5px;width:198.2px;height:22.6px;background:#fff;border:1px solid #c0c0c0;border-radius:2px"></div>
<div class="t" style="left:648px;top:653.5px;font-size:12px;color:#111;">8 8</div>
<div class="t" style="left:527.5px;top:679.2px;font-size:12px;color:#222;">Distances [mm]</div>
<div class="a" style="left:642.4px;top:673.15px;width:198.2px;height:22.6px;background:#fff;border:1px solid #c0c0c0;border-radius:2px"></div>
<div class="t" style="left:648px;top:679.2px;font-size:12px;color:#111;">150 150</div>
<div class="t" style="left:527.5px;top:704.8px;font-size:12px;color:#222;">Material</div>
<div class="a" style="left:643px;top:698.8px;width:173.3px;height:22.6px;background:linear-gradient(#fdfdfd 0%,#ececec 45%,#d0d0d0 46%,#c4c4c4 100%);border:1px solid #b0b0b0;border-radius:2px"></div>
<svg class="a" style="left:805.3px;top:707.1px" width="8" height="6"><path d="M1 1.5H6.5L3.75 4.5z" fill="#111"/></svg>
<div class="t" style="left:648px;top:704.8px;font-size:12px;color:#111;">B 500B</div>
<div class="t" style="left:527.5px;top:730.5px;font-size:12px;color:#222;">Number of fabrics</div>
<div class="a" style="left:642.4px;top:724.45px;width:198.2px;height:22.6px;background:#fff;border:1px solid #c0c0c0;border-radius:2px"></div>
<div class="t" style="left:648px;top:730.5px;font-size:12px;color:#111;">2</div>
<div class="t" style="left:527.5px;top:756.1px;font-size:12px;color:#222;">Concrete cover type</div>
<div class="a" style="left:643px;top:750.1px;width:197.6px;height:22.6px;background:linear-gradient(#fdfdfd 0%,#ececec 45%,#d0d0d0 46%,#c4c4c4 100%);border:1px solid #b0b0b0;border-radius:2px"></div>
<svg class="a" style="left:829.6px;top:758.4px" width="8" height="6"><path d="M1 1.5H6.5L3.75 4.5z" fill="#111"/></svg>
<div class="t" style="left:648px;top:756.1px;font-size:12px;color:#111;">From Settings</div>
<div class="a" style="left:820.6px;top:698.8px;width:19.6px;height:22.6px;background:linear-gradient(#fdfdfd 0%,#ececec 45%,#d0d0d0 46%,#c4c4c4 100%);border:1px solid #b0b0b0;border-radius:2px"></div>
<svg class="a" style="left:822px;top:701.8px" width="17" height="17"><path d="M13.5 7A5.5 5.5 0 0 0 3.5 5.5M3.5 10A5.5 5.5 0 0 0 13.5 11.5" fill="none" stroke="#3cb04c" stroke-width="2.2"/><path d="M2 2.5L3.2 7 7.2 5z M15 14.5L13.8 10 9.8 12z" fill="#3cb04c"/></svg>
<div class="t" style="left:527.5px;top:809.2px;font-size:12px;color:#222;">MP - Master point</div>
<div class="a" style="left:643px;top:803.2px;width:197.6px;height:22.6px;background:linear-gradient(#fdfdfd 0%,#ececec 45%,#d0d0d0 46%,#c4c4c4 100%);border:1px solid #b0b0b0;border-radius:2px"></div>
<svg class="a" style="left:829.6px;top:811.5px" width="8" height="6"><path d="M1 1.5H6.5L3.75 4.5z" fill="#111"/></svg>
<div class="t" style="left:648px;top:809.2px;font-size:12px;color:#111;">9</div>
<div class="t" style="left:527.5px;top:835.1px;font-size:12px;color:#222;">Position [mm]</div>
<div class="a" style="left:642.4px;top:829.1px;width:198.2px;height:22.6px;background:#fff;border:1px solid #c0c0c0;border-radius:2px"></div>
<div class="t" style="left:648px;top:835.1px;font-size:12px;color:#111;">0 0</div>
<div class="t" style="left:527.5px;top:861.0px;font-size:12px;color:#222;">Angle [&#176;]</div>
<div class="a" style="left:642.4px;top:855.0px;width:198.2px;height:22.6px;background:#fff;border:1px solid #c0c0c0;border-radius:2px"></div>
<div class="t" style="left:648px;top:861.0px;font-size:12px;color:#111;">0.0</div>
<div class="a" style="left:864px;top:159px;width:37px;height:24px;background:linear-gradient(#fdfdfd,#f4f4f4);border:1px solid #a8a8a8;border-bottom:none;border-radius:2px 2px 0 0"></div>
<div class="t" style="left:870px;top:165.3px;font-size:12px;color:#222;">Main</div>
<div class="a" style="left:863.6px;top:182px;width:1050.5px;height:972px;background:#f7f7f7;border:1px solid #a8a8a8;border-top:none"></div>
<div class="a" style="left:865px;top:182px;width:35px;height:2px;background:#f7f7f7"></div>
<div class="a" style="left:867px;top:185px;width:1044px;height:966px;background:#fff;border:2px solid #8c8c8c"></div>
<svg class="a" style="left:869px;top:187px;overflow:hidden" width="1040" height="962" viewBox="869 187 1040 962">
<path d="M925 266.5L945 249L1841.4 508.3L1841.3 1044.4L1820.6 1063L1731.6 1037.8L1731.6 678.2L1573 634.7L1573 966.6L1551.6 985.3L925 805Z M1035 479.3L1373 575.2L1373 730.4L1035 633.5Z" fill="#e3e3e3" fill-rule="evenodd"/>
<path d="M925 266.5L945 249L945 790L925 805Z" fill="#d4d4d4"/>
<path d="M1821 525.8L1841.4 508.3L1841.3 1044.4L1820.6 1063Z" fill="#d6d6d6"/>
<path d="M1552.6 624.4L1573 634.7L1573 966.6L1551.6 985.3Z" fill="#d4d4d4"/>
<path d="M1731.6 678.2L1740 680.5L1740 1040L1731.6 1037.8Z" fill="#dadada"/>
<path d="M1026 466L1035 479.3L1035 633.5L1026 641Z" fill="#d0d0d0"/>
<path d="M1373 575.2L1381.4 568L1381.4 745L1373 730.4Z" fill="#dcdcdc"/>
<path d="M1035 633.5L1026 641L1364 738L1373 730.4Z" fill="#eaeaea"/>
<path d="M1563 977L1735 1030" stroke="#d0d0d0" stroke-width="1"/>
<defs><clipPath id="mA"><path d="M928.0 262.0L1836.0 525.0L1836.0 1064.0L928.0 802.0Z M1015.0 463.6L1383.0 568.1L1383.0 758.4L1015.0 652.8Z M1549.0 618.1L1740.0 670.8L1740.0 1120.0L1549.0 1120.0Z" clip-rule="evenodd"/></clipPath>
<clipPath id="mB"><path d="M941.5 250.5L1849.5 513.5L1849.5 1052.5L941.5 790.5Z M1028.5 452.1L1396.5 556.6L1396.5 746.9L1028.5 641.3Z M1562.5 606.6L1753.5 659.3L1753.5 1108.5L1562.5 1108.5Z" clip-rule="evenodd"/></clipPath>
</defs>
<path d="M1015 830.6L1035.6 813L1123.8 838.8L1103 856Z" fill="#1a1a5e"/>
<path d="M1731.4 1037.8L1752.3 1019.8L1841.4 1045.4L1820.6 1063.4Z" fill="#1a1a5e"/>
<g clip-path="url(#mB)"><g stroke="#e8741f" stroke-width="1.3"><line x1="947.5" y1="280.5" x2="1832.0" y2="536.4"/><line x1="947.5" y1="307.4" x2="1832.0" y2="563.3"/><line x1="947.5" y1="334.2" x2="1832.0" y2="590.1"/><line x1="947.5" y1="361.1" x2="1832.0" y2="617.0"/><line x1="947.5" y1="388.0" x2="1832.0" y2="643.9"/><line x1="947.5" y1="414.9" x2="1832.0" y2="670.7"/><line x1="947.5" y1="441.7" x2="1832.0" y2="697.6"/><line x1="947.5" y1="468.6" x2="1832.0" y2="724.5"/><line x1="947.5" y1="495.5" x2="1832.0" y2="751.3"/><line x1="947.5" y1="522.3" x2="1832.0" y2="778.2"/><line x1="947.5" y1="549.2" x2="1832.0" y2="805.1"/><line x1="947.5" y1="576.1" x2="1832.0" y2="832.0"/><line x1="947.5" y1="602.9" x2="1832.0" y2="858.8"/><line x1="947.5" y1="629.8" x2="1832.0" y2="885.7"/><line x1="947.5" y1="656.7" x2="1832.0" y2="912.6"/><line x1="947.5" y1="683.5" x2="1832.0" y2="939.4"/><line x1="947.5" y1="710.4" x2="1832.0" y2="966.3"/><line x1="947.5" y1="737.3" x2="1832.0" y2="993.2"/><line x1="947.5" y1="764.2" x2="1832.0" y2="1020.0"/></g><g stroke="#b05e20" stroke-width="1.6"><line x1="959.9" y1="263.3" x2="959.9" y2="789.8"/><line x1="986.8" y1="271.1" x2="986.8" y2="797.6"/><line x1="1013.7" y1="278.9" x2="1013.7" y2="805.4"/><line x1="1040.5" y1="286.6" x2="1040.5" y2="813.1"/><line x1="1067.4" y1="294.4" x2="1067.4" y2="820.9"/><line x1="1094.3" y1="302.2" x2="1094.3" y2="828.7"/><line x1="1121.2" y1="310.0" x2="1121.2" y2="836.5"/><line x1="1148.1" y1="317.7" x2="1148.1" y2="844.2"/><line x1="1174.9" y1="325.5" x2="1174.9" y2="852.0"/><line x1="1201.8" y1="333.3" x2="1201.8" y2="859.8"/><line x1="1228.7" y1="341.1" x2="1228.7" y2="867.6"/><line x1="1255.6" y1="348.8" x2="1255.6" y2="875.3"/><line x1="1282.5" y1="356.6" x2="1282.5" y2="883.1"/><line x1="1309.3" y1="364.4" x2="1309.3" y2="890.9"/><line x1="1336.2" y1="372.2" x2="1336.2" y2="898.7"/><line x1="1363.1" y1="379.9" x2="1363.1" y2="906.4"/><line x1="1390.0" y1="387.7" x2="1390.0" y2="914.2"/><line x1="1416.9" y1="395.5" x2="1416.9" y2="922.0"/><line x1="1443.7" y1="403.3" x2="1443.7" y2="929.8"/><line x1="1470.6" y1="411.1" x2="1470.6" y2="937.6"/><line x1="1497.5" y1="418.8" x2="1497.5" y2="945.3"/><line x1="1524.4" y1="426.6" x2="1524.4" y2="953.1"/><line x1="1551.3" y1="434.4" x2="1551.3" y2="960.9"/><line x1="1578.1" y1="442.2" x2="1578.1" y2="968.7"/><line x1="1605.0" y1="449.9" x2="1605.0" y2="976.4"/><line x1="1631.9" y1="457.7" x2="1631.9" y2="984.2"/><line x1="1658.8" y1="465.5" x2="1658.8" y2="992.0"/><line x1="1685.7" y1="473.3" x2="1685.7" y2="999.8"/><line x1="1712.5" y1="481.0" x2="1712.5" y2="1007.5"/><line x1="1739.4" y1="488.8" x2="1739.4" y2="1015.3"/><line x1="1766.3" y1="496.6" x2="1766.3" y2="1023.1"/><line x1="1793.2" y1="504.4" x2="1793.2" y2="1030.9"/><line x1="1820.1" y1="512.1" x2="1820.1" y2="1038.6"/></g></g>
<g clip-path="url(#mA)"><g stroke="#e8741f" stroke-width="1.3"><line x1="934.0" y1="292.0" x2="1820.0" y2="548.3"/><line x1="934.0" y1="318.9" x2="1820.0" y2="575.2"/><line x1="934.0" y1="345.7" x2="1820.0" y2="602.1"/><line x1="934.0" y1="372.6" x2="1820.0" y2="628.9"/><line x1="934.0" y1="399.5" x2="1820.0" y2="655.8"/><line x1="934.0" y1="426.4" x2="1820.0" y2="682.7"/><line x1="934.0" y1="453.2" x2="1820.0" y2="709.5"/><line x1="934.0" y1="480.1" x2="1820.0" y2="736.4"/><line x1="934.0" y1="507.0" x2="1820.0" y2="763.3"/><line x1="934.0" y1="533.8" x2="1820.0" y2="790.1"/><line x1="934.0" y1="560.7" x2="1820.0" y2="817.0"/><line x1="934.0" y1="587.6" x2="1820.0" y2="843.9"/><line x1="934.0" y1="614.4" x2="1820.0" y2="870.8"/><line x1="934.0" y1="641.3" x2="1820.0" y2="897.6"/><line x1="934.0" y1="668.2" x2="1820.0" y2="924.5"/><line x1="934.0" y1="695.0" x2="1820.0" y2="951.4"/><line x1="934.0" y1="721.9" x2="1820.0" y2="978.2"/><line x1="934.0" y1="748.8" x2="1820.0" y2="1005.1"/><line x1="934.0" y1="775.7" x2="1820.0" y2="1032.0"/></g><g stroke="#b05e20" stroke-width="1.6"><line x1="946.4" y1="274.8" x2="946.4" y2="801.3"/><line x1="973.3" y1="282.6" x2="973.3" y2="809.1"/><line x1="1000.2" y1="290.4" x2="1000.2" y2="816.9"/><line x1="1027.0" y1="298.1" x2="1027.0" y2="824.6"/><line x1="1053.9" y1="305.9" x2="1053.9" y2="832.4"/><line x1="1080.8" y1="313.7" x2="1080.8" y2="840.2"/><line x1="1107.7" y1="321.5" x2="1107.7" y2="848.0" stroke="#9a5220" stroke-width="2.3"/><line x1="1134.6" y1="329.2" x2="1134.6" y2="855.7"/><line x1="1161.4" y1="337.0" x2="1161.4" y2="863.5"/><line x1="1188.3" y1="344.8" x2="1188.3" y2="871.3"/><line x1="1215.2" y1="352.6" x2="1215.2" y2="879.1"/><line x1="1242.1" y1="360.3" x2="1242.1" y2="886.8"/><line x1="1269.0" y1="368.1" x2="1269.0" y2="894.6"/><line x1="1295.8" y1="375.9" x2="1295.8" y2="902.4" stroke="#9a5220" stroke-width="2.3"/><line x1="1322.7" y1="383.7" x2="1322.7" y2="910.2"/><line x1="1349.6" y1="391.4" x2="1349.6" y2="917.9"/><line x1="1376.5" y1="399.2" x2="1376.5" y2="925.7"/><line x1="1403.4" y1="407.0" x2="1403.4" y2="933.5"/><line x1="1430.2" y1="414.8" x2="1430.2" y2="941.3"/><line x1="1457.1" y1="422.6" x2="1457.1" y2="949.1"/><line x1="1484.0" y1="430.3" x2="1484.0" y2="956.8" stroke="#9a5220" stroke-width="2.3"/><line x1="1510.9" y1="438.1" x2="1510.9" y2="964.6"/><line x1="1537.8" y1="445.9" x2="1537.8" y2="972.4"/><line x1="1564.6" y1="453.7" x2="1564.6" y2="980.2"/><line x1="1591.5" y1="461.4" x2="1591.5" y2="987.9"/><line x1="1618.4" y1="469.2" x2="1618.4" y2="995.7"/><line x1="1645.3" y1="477.0" x2="1645.3" y2="1003.5"/><line x1="1672.2" y1="484.8" x2="1672.2" y2="1011.3" stroke="#9a5220" stroke-width="2.3"/><line x1="1699.0" y1="492.5" x2="1699.0" y2="1019.0"/><line x1="1725.9" y1="500.3" x2="1725.9" y2="1026.8"/><line x1="1752.8" y1="508.1" x2="1752.8" y2="1034.6"/><line x1="1779.7" y1="515.9" x2="1779.7" y2="1042.4"/><line x1="1806.6" y1="523.6" x2="1806.6" y2="1050.1"/></g></g>
<!--BARS--><path d="M948.3 273.1V265.5Q948.3 261.5 952.4 261.7L1825 514.5Q1831.7 517 1831.7 524V532.4" fill="none" stroke="#92343a" stroke-width="2.3" stroke-linecap="round"/><path d="M934.8 288.3V277Q934.8 273.1 938.6 273.1L1813 525.5Q1817.8 527 1817.8 533V543.3" fill="none" stroke="#92343a" stroke-width="2.3" stroke-linecap="round"/><path d="M947.5 786.2Q934 786 935 795Q937 801.5 946.3 801.3L1543 971Q1549.5 972.5 1549.7 965V524" fill="none" stroke="#92343a" stroke-width="2.0" stroke-linecap="round"/><path d="M947.5 786.2L1556 960" fill="none" stroke="#92343a" stroke-width="1.6" stroke-linecap="round"/><path d="M1556 960Q1562.9 961 1562.9 954V524" fill="none" stroke="#a86a70" stroke-width="1.3" stroke-linecap="round"/><path d="M961 773.8Q952 775 950 781" fill="none" stroke="#92343a" stroke-width="1.6" stroke-linecap="round"/><path d="M1754.2 569.6V1012Q1755 1021 1765 1023L1809 1035.5Q1817 1038 1816.8 1044Q1815 1051 1808 1049.5L1752.3 1034Q1742 1031 1741.8 1024V580" fill="none" stroke="#92343a" stroke-width="2.0" stroke-linecap="round"/><path d="M1818.7 1021.7Q1831 1030 1829 1036Q1826 1040 1818 1038.5L1800 1033" fill="none" stroke="#92343a" stroke-width="1.6" stroke-linecap="round"/><line x1="955.0" y1="430.3" x2="1300.0" y2="529.3" stroke="#92343a" stroke-width="1.4"/><line x1="1290.0" y1="526.4" x2="1832.0" y2="682.0" stroke="#92343a" stroke-width="2.4"/><line x1="955.0" y1="437.3" x2="1300.0" y2="536.3" stroke="#92343a" stroke-width="1.4"/><line x1="1290.0" y1="533.4" x2="1832.0" y2="689.0" stroke="#92343a" stroke-width="2.4"/><line x1="955.0" y1="444.3" x2="1300.0" y2="543.3" stroke="#92343a" stroke-width="1.4"/><line x1="1290.0" y1="540.4" x2="1832.0" y2="696.0" stroke="#92343a" stroke-width="2.4"/><line x1="967.0" y1="421.5" x2="1452.0" y2="560.7" stroke="#92343a" stroke-width="1.3"/><line x1="956.0" y1="622.7" x2="1452.0" y2="765.1" stroke="#92343a" stroke-width="1.2"/><line x1="956.0" y1="633.0" x2="1452.0" y2="775.4" stroke="#92343a" stroke-width="1.5"/><line x1="956.0" y1="644.7" x2="1452.0" y2="787.1" stroke="#92343a" stroke-width="1.5"/><line x1="1002.8" y1="401.9" x2="1002.8" y2="706.6" stroke="#92343a" stroke-width="1.6"/><line x1="1011.7" y1="404.2" x2="1011.7" y2="708.6" stroke="#92343a" stroke-width="2.2"/><line x1="1016.6" y1="390.2" x2="1016.6" y2="694.8" stroke="#92343a" stroke-width="1.6"/><line x1="1025.5" y1="392.5" x2="1025.5" y2="696.9" stroke="#92343a" stroke-width="1.8"/><line x1="1382.5" y1="511.7" x2="1382.5" y2="816.6" stroke="#92343a" stroke-width="1.6"/><line x1="1391.3" y1="514.5" x2="1391.3" y2="818.6" stroke="#92343a" stroke-width="1.8"/><line x1="1395.9" y1="499.3" x2="1395.9" y2="804.8" stroke="#92343a" stroke-width="1.6"/><line x1="1404.8" y1="502.8" x2="1404.8" y2="806.9" stroke="#92343a" stroke-width="2.6"/><line x1="962.7" y1="487.0" x2="1065.8" y2="412.0" stroke="#92343a" stroke-width="2.4"/><line x1="967.3" y1="496.4" x2="1073.6" y2="419.0" stroke="#92343a" stroke-width="2.4"/><line x1="1334.5" y1="506.9" x2="1429.7" y2="629.0" stroke="#92343a" stroke-width="1.6"/><line x1="1341.4" y1="502.8" x2="1435.9" y2="622.0" stroke="#92343a" stroke-width="1.6"/><line x1="1345.5" y1="497.9" x2="1440.0" y2="620.0" stroke="#92343a" stroke-width="1.6"/><line x1="1351.0" y1="493.1" x2="1446.2" y2="615.2" stroke="#92343a" stroke-width="1.6"/><line x1="961.4" y1="593.4" x2="1056.6" y2="715.5" stroke="#92343a" stroke-width="1.6"/><line x1="968.3" y1="588.6" x2="1062.8" y2="710.7" stroke="#92343a" stroke-width="1.6"/><line x1="973.1" y1="584.0" x2="1068.0" y2="706.0" stroke="#92343a" stroke-width="1.6"/><line x1="977.9" y1="579.7" x2="1073.1" y2="701.7" stroke="#92343a" stroke-width="1.6"/><line x1="1334.5" y1="789.7" x2="1440.7" y2="713.1" stroke="#92343a" stroke-width="2.4"/><line x1="1340.7" y1="797.9" x2="1446.2" y2="721.4" stroke="#92343a" stroke-width="2.4"/><line x1="1485.9" y1="660.5" x2="1625.0" y2="559.0" stroke="#92343a" stroke-width="2.6"/><line x1="1678.4" y1="588.3" x2="1804.0" y2="751.4" stroke="#92343a" stroke-width="2.2"/><line x1="1691.8" y1="575.0" x2="1817.4" y2="738.0" stroke="#92343a" stroke-width="2.2"/><!--/BARS-->
</svg>
<!--OVERLAY-->
<svg class="a" style="left:1650px;top:188px" width="260" height="36" viewBox="1650 188 260 36"><path d="M1661.5 207.5L1673 195 1684.5 207.5M1664.5 204.5V218H1670V211H1676V218H1681.5V204.5" fill="none" stroke="#808080" stroke-width="1.8" stroke-linejoin="round"/><circle cx="1709.3" cy="206.2" r="11.2" fill="none" stroke="#808080" stroke-width="1.8"/><path d="M1699 205Q1709.3 197 1719.6 205" fill="none" stroke="#808080" stroke-width="1.8"/><path d="M1703.5 205.5Q1709.3 200.5 1715 205.5A5.7 5.7 0 0 1 1703.5 205.5Z" fill="#808080"/><path d="M1741 208H1733.5V194.5H1747V201" fill="none" stroke="#808080" stroke-width="1.6"/><circle cx="1745.5" cy="207.5" r="6.2" fill="#fff" stroke="#808080" stroke-width="1.8"/><path d="M1750 212L1757 218.5" stroke="#808080" stroke-width="3"/><circle cx="1779.5" cy="204.5" r="8.8" fill="none" stroke="#808080" stroke-width="1.9"/><path d="M1786 211L1793.5 218.5" stroke="#808080" stroke-width="3.4"/><path d="M1817.6 194.5V218M1806 206.2H1829.3" stroke="#808080" stroke-width="1.6"/><path d="M1814.2 198L1817.6 194 1821 198M1814.2 214.5L1817.6 218.5 1821 214.5M1809.5 202.8L1805.5 206.2 1809.5 209.6M1825.7 202.8L1829.7 206.2 1825.7 209.6" fill="none" stroke="#808080" stroke-width="1.6"/><path d="M1845.5 197.5A11 11 0 1 1 1843 209" fill="none" stroke="#808080" stroke-width="1.9"/><path d="M1842 195.5V201.5H1848" fill="none" stroke="#808080" stroke-width="1.6"/><path d="M1879 196L1885 202M1879 196H1883.5M1879 196V200.5M1902 196L1896 202M1902 196H1897.5M1902 196V200.5M1879 218L1885 212M1879 218H1883.5M1879 218V213.5M1902 218L1896 212M1902 218H1897.5M1902 218V213.5" fill="none" stroke="#808080" stroke-width="1.5"/></svg>
<svg class="a" style="left:1800px;top:245px" width="100" height="90" viewBox="1800 245 100 90"><ellipse cx="1850.5" cy="304.5" rx="37.5" ry="19.5" fill="none" stroke="#dcdcdc" stroke-width="7"/><path d="M1821.6 267.5L1844.2 255.1 1877 261.7 1872.6 293 1857.3 313.4 1824.5 301Z" fill="#a6a6a6"/><path d="M1821.6 267.5L1858.8 277 1877 261.7M1858.8 277L1857.3 313.4" fill="none" stroke="#8a8a8a" stroke-width="0.8"/><path d="M1844.2 255.1L1844.8 287.5 1824.5 301M1844.8 287.5L1872.6 293" fill="none" stroke="#bdbdbd" stroke-width="0.7"/><path d="M1821.6 267.5L1844.2 255.1 1877 261.7 1872.6 293 1857.3 313.4 1824.5 301Z" fill="none" stroke="#8a8a8a" stroke-width="0.8"/><path d="M1819 296L1825 294M1883 303L1893 308M1819 326L1825 314M1821 316L1834 313" stroke="#777" stroke-width="1.6" fill="none"/><text x="1837" y="294" font-size="6" fill="#fff" font-family="Liberation Sans">+Y</text></svg>
<svg class="a" style="left:895px;top:1050px" width="75" height="70" viewBox="895 1050 75 70"><path d="M915.2 1100V1084M911 1084.5L915.2 1069 919.4 1084.5Z" stroke="#1010f0" stroke-width="2.2" fill="#1010f0"/><path d="M916 1101L926 1093.5M922.5 1091L934.8 1086 928.5 1097.5Z" stroke="#108010" stroke-width="2.4" fill="#108010"/><path d="M917 1103L933 1106.5M932.5 1102L948.8 1111.4 931.5 1111Z" stroke="#f01010" stroke-width="2.4" fill="#f01010"/><circle cx="915.2" cy="1102.6" r="4" fill="#777"/><circle cx="914" cy="1101.5" r="1.6" fill="#aaa"/></svg>
<div class="t" style="left:917.5px;top:1056.0px;font-size:13px;color:#333;">Z</div>
<div class="t" style="left:935.5px;top:1072.0px;font-size:13px;color:#333;">Y</div>
<div class="t" style="left:949px;top:1097.0px;font-size:13px;color:#333;">X</div>
<div class="t" style="left:874px;top:1130.7px;font-size:15px;color:#222;">WF1-Wire fabricMaterial B 500B, Diameter 8(8) mm</div>
</body></html>
